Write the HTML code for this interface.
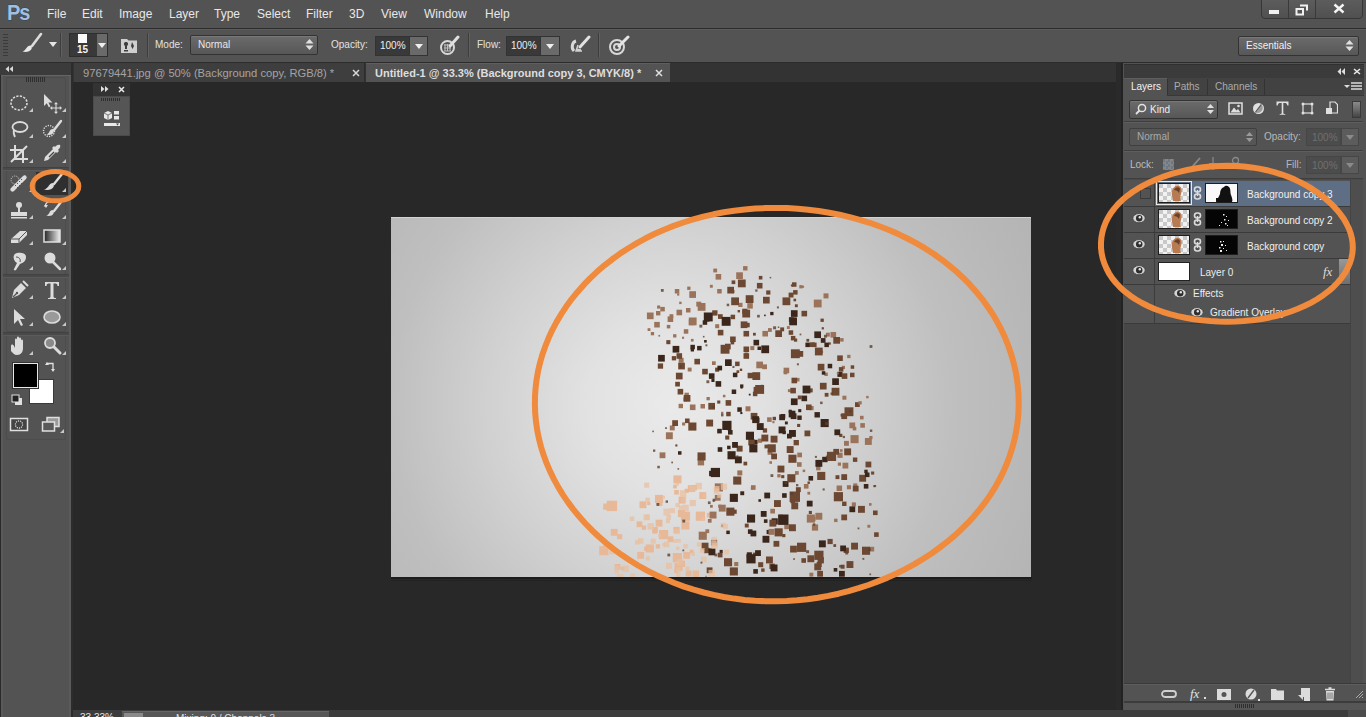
<!DOCTYPE html><html><head><meta charset="utf-8"><style>*{margin:0;padding:0;box-sizing:border-box}
html,body{width:1366px;height:717px;overflow:hidden;background:#282828;font-family:"Liberation Sans",sans-serif;position:relative}
div,span,svg{position:absolute;display:block}
.t{white-space:nowrap;line-height:1}
.m{top:8px;font-size:12px;color:#e8e8e8}
.sep{width:2px;border-left:1px solid #3d3d3d;border-right:1px solid #616161}
.sel{border:1px solid #333;border-radius:2px;background:linear-gradient(#6b6b6b,#575757);box-shadow:inset 0 1px 0 #787878}
.inp{background:#393939;border:1px solid #333}
.dd{background:#6a6a6a;border:1px solid #333;border-left:none}
.lbl{font-size:10px;color:#e2e2e2}
</style></head><body><div style="left:0;top:0;width:1366px;height:28px;background:#535353"></div>
<div style="left:0;top:28px;width:1366px;height:1px;background:#2c2c2c"></div>
<svg style="left:0;top:0" width="40" height="28" viewBox="0 0 40 28"><text x="7" y="18.6" font-family="Liberation Sans" font-weight="bold" font-size="20" letter-spacing="-1" fill="#a4bedb" stroke="#2f4862" stroke-width="1" paint-order="stroke" transform="scale(1 1.1)">Ps</text></svg>
<span class="t m" style="left:47px">File</span>
<span class="t m" style="left:82px">Edit</span>
<span class="t m" style="left:119px">Image</span>
<span class="t m" style="left:169px">Layer</span>
<span class="t m" style="left:214px">Type</span>
<span class="t m" style="left:257px">Select</span>
<span class="t m" style="left:306px">Filter</span>
<span class="t m" style="left:349px">3D</span>
<span class="t m" style="left:381px">View</span>
<span class="t m" style="left:424px">Window</span>
<span class="t m" style="left:485px">Help</span>
<!-- window buttons -->
<div style="left:1261px;top:-2px;width:102px;height:21px;border:1px solid #373737;border-radius:0 0 4px 4px;background:linear-gradient(#5d5d5d,#505050)"></div>
<div style="left:1288px;top:0;width:1px;height:18px;background:#3a3a3a"></div>
<div style="left:1315px;top:0;width:1px;height:18px;background:#3a3a3a"></div>
<div style="left:1269px;top:10px;width:10px;height:4px;background:#f0f0f0"></div>
<svg style="left:1295px;top:4px" width="14" height="12" viewBox="0 0 14 12"><path d="M5 1.5h7v5M1.5 5h6.5v5.5h-6.5z" fill="none" stroke="#f0f0f0" stroke-width="2"/></svg>
<svg style="left:1333px;top:3px" width="12" height="11" viewBox="0 0 12 11"><path d="M1.5 1.5l9 8M10.5 1.5l-9 8" stroke="#f4f4f4" stroke-width="2.4"/></svg>

<!-- options bar -->
<div style="left:0;top:29px;width:1366px;height:33px;background:#535353;border-top:1px solid #5c5c5c"></div>
<div style="left:0;top:62px;width:1366px;height:1px;background:#2c2c2c"></div>
<div style="left:3px;top:34px;width:5px;height:23px;background:repeating-linear-gradient(#3a3a3a 0 1px,transparent 1px 3px)"></div>
<svg style="left:20px;top:32px" width="24" height="22" viewBox="0 0 24 22"><path d="M21 2L12 14" stroke="#dcdcdc" stroke-width="2.6" stroke-linecap="round"/><path d="M10.5 13.5c-2 0-3 1-4 2.5S4 19 2.5 19.5c3 1 7.5 0.5 9-2.5c0.5-1.5 0.5-2.5-1-3.5z" fill="#e8e8e8"/></svg>
<svg style="left:49px;top:42px" width="8" height="5" viewBox="0 0 8 5"><path d="M0 0h8L4 5z" fill="#e6e6e6"/></svg>
<div class="sep" style="left:60px;top:33px;height:24px"></div>
<div style="left:69px;top:33px;width:39px;height:24px;background:#393939;border:1px solid #2e2e2e"></div>
<div style="left:97px;top:34px;width:10px;height:22px;background:#6a6a6a"></div>
<svg style="left:98px;top:43px" width="8" height="5" viewBox="0 0 8 5"><path d="M0 0h8L4 5z" fill="#f0f0f0"/></svg>
<div style="left:78px;top:34px;width:9px;height:9px;background:#fafafa"></div>
<div class="t" style="left:77px;top:45px;font-size:10px;font-weight:bold;color:#f4f4f4">15</div>
<svg style="left:120px;top:36px" width="18" height="18" viewBox="0 0 18 18"><path d="M1 3h6l1.5 1.5H17V17H1z" fill="#cfcfcf"/><path d="M5 6c-1.5 1-1.5 3 0 4v3h2V10c1.5-1 1.5-3 0-4zM12 6l-1 4 1.5 3 1.5-3z" fill="#3e3e3e"/><path d="M4 14h4v1.5H4z" fill="#3e3e3e"/></svg>
<div class="sep" style="left:147px;top:33px;height:24px"></div>
<span class="t lbl" style="left:155px;top:40px">Mode:</span>
<div class="sel" style="left:190px;top:35px;width:128px;height:20px"></div>
<span class="t lbl" style="left:198px;top:40px;color:#e8e8e8">Normal</span>
<svg style="left:305px;top:38px" width="9" height="13" viewBox="0 0 9 13"><path d="M0.5 5.5L4.5 1l4 4.5zM0.5 7.5l4 4.5 4-4.5z" fill="#e0e0e0"/></svg>
<span class="t lbl" style="left:331px;top:40px">Opacity:</span>
<div class="inp" style="left:375px;top:36px;width:35px;height:20px"></div>
<span class="t lbl" style="left:380px;top:41px;color:#f0f0f0">100%</span>
<div class="dd" style="left:410px;top:36px;width:18px;height:20px"></div>
<svg style="left:415px;top:44px" width="8" height="5" viewBox="0 0 8 5"><path d="M0 0h8L4 5z" fill="#f0f0f0"/></svg>
<svg style="left:439px;top:35px" width="21" height="21" viewBox="0 0 21 21"><circle cx="8.5" cy="12.5" r="6.5" fill="none" stroke="#d8d8d8" stroke-width="2"/><path d="M5 10h7M5 13h7M5 16h7M6 9v7M8.5 9v7M11 9v7" stroke="#bdbdbd" stroke-width="1"/><path d="M19 2l-8 9" stroke="#e0e0e0" stroke-width="3" stroke-linecap="round"/></svg>
<div class="sep" style="left:468px;top:33px;height:24px"></div>
<span class="t lbl" style="left:477px;top:40px">Flow:</span>
<div class="inp" style="left:506px;top:36px;width:35px;height:20px"></div>
<span class="t lbl" style="left:511px;top:41px;color:#f0f0f0">100%</span>
<div class="dd" style="left:541px;top:36px;width:19px;height:20px"></div>
<svg style="left:546px;top:44px" width="8" height="5" viewBox="0 0 8 5"><path d="M0 0h8L4 5z" fill="#f0f0f0"/></svg>
<svg style="left:569px;top:35px" width="22" height="21" viewBox="0 0 22 21"><path d="M7 6C3 7 2 13 5 16" fill="none" stroke="#d8d8d8" stroke-width="3"/><path d="M20 2l-9 10" stroke="#e2e2e2" stroke-width="3" stroke-linecap="round"/><path d="M7 14l5 1M9 10l-2 6h6" fill="none" stroke="#d0d0d0" stroke-width="1.5"/></svg>
<div class="sep" style="left:598px;top:33px;height:24px"></div>
<svg style="left:608px;top:35px" width="22" height="21" viewBox="0 0 22 21"><circle cx="9" cy="12" r="7" fill="none" stroke="#d8d8d8" stroke-width="2"/><circle cx="9" cy="12" r="3" fill="none" stroke="#d8d8d8" stroke-width="2"/><path d="M20 2l-9 9" stroke="#e4e4e4" stroke-width="3" stroke-linecap="round"/></svg>
<div class="sel" style="left:1238px;top:36px;width:121px;height:20px"></div>
<span class="t" style="left:1246px;top:41px;font-size:10px;color:#f0f0f0">Essentials</span>
<svg style="left:1345px;top:39px" width="9" height="13" viewBox="0 0 9 13"><path d="M0.5 5.5L4.5 1l4 4.5zM0.5 7.5l4 4.5 4-4.5z" fill="#e0e0e0"/></svg>
<div style="left:73px;top:63px;width:1050px;height:19px;background:#333333"></div>
<div style="left:74px;top:63px;width:291px;height:19px;background:#3e3e3e;border-right:1px solid #2e2e2e"></div>
<span class="t" style="left:83px;top:68px;font-size:11.2px;color:#a4a4a4">97679441.jpg @ 50% (Background copy, RGB/8) *</span>
<svg style="left:352px;top:69px" width="8" height="8" viewBox="0 0 8 8"><path d="M1 1l6 6M7 1L1 7" stroke="#d8d8d8" stroke-width="1.5"/></svg>
<div style="left:366px;top:63px;width:304px;height:19px;background:#535353;border-top:1px solid #5e5e5e"></div>
<span class="t" style="left:375px;top:68px;font-size:11px;font-weight:bold;color:#dedede">Untitled-1 @ 33.3% (Background copy 3, CMYK/8) *</span>
<svg style="left:655px;top:69px" width="8" height="8" viewBox="0 0 8 8"><path d="M1 1l6 6M7 1L1 7" stroke="#e0e0e0" stroke-width="1.5"/></svg>
<!-- mini floating panel -->
<div style="left:93px;top:83px;width:37px;height:13px;background:#333333"></div>
<svg style="left:101px;top:86px" width="8" height="6" viewBox="0 0 8 6"><path d="M0 0l3.5 3L0 6zM4 0l3.5 3L4 6z" fill="#e0e0e0"/></svg>
<svg style="left:118px;top:86px" width="7" height="7" viewBox="0 0 7 7"><path d="M1 1l5 5M6 1L1 6" stroke="#e8e8e8" stroke-width="1.5"/></svg>
<div style="left:93px;top:96px;width:37px;height:40px;background:#555555;border:1px solid #4a4a4a"></div>
<div style="left:101px;top:98px;width:20px;height:3px;background:repeating-linear-gradient(90deg,#2e2e2e 0 1px,transparent 1px 2px)"></div>
<svg style="left:102px;top:109px" width="20" height="20" viewBox="0 0 20 20"><path d="M2 4l4-2 4 2v5l-4 2-4-2z" fill="#e8e8e8"/><path d="M2 4l4 2 4-2M6 6v5" stroke="#555" stroke-width="0.8" fill="none"/><rect x="12" y="2" width="5" height="3.5" fill="#e8e8e8"/><rect x="12" y="7" width="5" height="3.5" fill="#e8e8e8"/><rect x="2" y="14" width="16" height="3" fill="#e8e8e8"/><path d="M14 14.5h3l-1.5 2z" fill="#444"/></svg>
<div style="left:0;top:63px;width:73px;height:12px;background:#3b3b3b"></div>
<svg style="left:5px;top:66px" width="8" height="6" viewBox="0 0 8 6"><path d="M4 0L0.5 3L4 6zM8 0L4.5 3L8 6z" fill="#dadada"/></svg>
<div style="left:0;top:75px;width:1px;height:642px;background:#2a2a2a"></div>
<div style="left:1px;top:75px;width:70px;height:642px;background:#535353;border-left:2px solid #5a5a5a;border-right:2px solid #5a5a5a"></div>
<div style="left:71px;top:63px;width:2px;height:654px;background:#2c2c2c"></div>
<div style="left:1px;top:75px;width:70px;height:1px;background:#646464"></div>
<div style="left:6px;top:77px;width:60px;height:91px;border:1px solid #4c4c4c;border-radius:2px"></div>
<div style="left:6px;top:170px;width:60px;height:105px;border:1px solid #4c4c4c;border-radius:2px"></div>
<div style="left:6px;top:277px;width:60px;height:55px;border:1px solid #4c4c4c;border-radius:2px"></div>
<div style="left:6px;top:334px;width:60px;height:106px;border:1px solid #4c4c4c;border-radius:2px"></div>
<div style="left:26px;top:77px;width:20px;height:5px;background:repeating-linear-gradient(90deg,#2e2e2e 0 1px,transparent 1px 2px)"></div>
<div style="left:3px;top:167px;width:66px;height:4px;background:#494949;border-top:1px solid #424242;border-bottom:1px solid #5a5a5a"></div>
<div style="left:3px;top:274px;width:66px;height:4px;background:#494949;border-top:1px solid #424242;border-bottom:1px solid #5a5a5a"></div>
<div style="left:3px;top:332px;width:66px;height:4px;background:#494949;border-top:1px solid #424242;border-bottom:1px solid #5a5a5a"></div>
<div style="left:36px;top:172px;width:32px;height:23px;background:#2f2f2f"></div>
<svg style="left:7px;top:91px" width="24" height="24" viewBox="-12 -12 24 24"><ellipse cx="0" cy="0" rx="8" ry="7" fill="none" stroke="#dcdcdc" stroke-width="1.6" stroke-dasharray="2.2 1.4"/></svg>
<svg style="left:29px;top:108px" width="4" height="4" viewBox="0 0 4 4"><path d="M4 0v4H0z" fill="#c8c8c8"/></svg>
<svg style="left:40px;top:91px" width="24" height="24" viewBox="-12 -12 24 24"><path d="M-8-9v12l2.8-2.8 2 4 1.6-.8-2-4h4z" fill="#dcdcdc"/><path d="M4 0v10M-1 5h10" stroke="#dcdcdc" stroke-width="1.1"/><path d="M4-1l-2 2.2h4zM4 11l-2-2.2h4zM-2 5l2.2-2v4zM10 5l-2.2-2v4z" fill="#dcdcdc"/></svg>
<svg style="left:62px;top:108px" width="4" height="4" viewBox="0 0 4 4"><path d="M4 0v4H0z" fill="#c8c8c8"/></svg>
<svg style="left:7px;top:117px" width="24" height="24" viewBox="-12 -12 24 24"><ellipse cx="1" cy="-2" rx="7.5" ry="5" fill="none" stroke="#dcdcdc" stroke-width="1.8"/><path d="M-5 1c-1 3 0 5 1 7" stroke="#dcdcdc" stroke-width="1.8" fill="none"/></svg>
<svg style="left:29px;top:134px" width="4" height="4" viewBox="0 0 4 4"><path d="M4 0v4H0z" fill="#c8c8c8"/></svg>
<svg style="left:40px;top:117px" width="24" height="24" viewBox="-12 -12 24 24"><circle cx="-3" cy="2" r="5.5" fill="none" stroke="#dcdcdc" stroke-width="1.4" stroke-dasharray="1.2 1.2"/><path d="M9-8L2 1" stroke="#dcdcdc" stroke-width="2.4" stroke-linecap="round"/><path d="M1 0c-2 0-3 1-3.5 2.5-.5 1.5-2 3-3.5 3 3 1 6.5.5 7.5-2 .5-1.5.5-2.5-.5-3.5z" fill="#dcdcdc"/></svg>
<svg style="left:62px;top:134px" width="4" height="4" viewBox="0 0 4 4"><path d="M4 0v4H0z" fill="#c8c8c8"/></svg>
<svg style="left:7px;top:142px" width="24" height="24" viewBox="-12 -12 24 24"><path d="M-4-9v14h13M-9-4h13v13M-8 8L8-8" stroke="#dcdcdc" stroke-width="2" fill="none"/></svg>
<svg style="left:29px;top:159px" width="4" height="4" viewBox="0 0 4 4"><path d="M4 0v4H0z" fill="#c8c8c8"/></svg>
<svg style="left:40px;top:142px" width="24" height="24" viewBox="-12 -12 24 24"><path d="M8-9c-2-1-4 1-5 2l-1-1-2 2 1 1-8 8-1 4 4-1 8-8 1 1 2-2-1-1c1-1 3-3 2-5z" fill="#dcdcdc"/><path d="M-3 3l5-5" stroke="#444" stroke-width="1.2"/></svg>
<svg style="left:62px;top:159px" width="4" height="4" viewBox="0 0 4 4"><path d="M4 0v4H0z" fill="#c8c8c8"/></svg>
<svg style="left:7px;top:171px" width="24" height="24" viewBox="-12 -12 24 24"><path d="M-8 5L4-7c2-2 5 1 3 3L-5 8c-2 2-5-1-3-3z" fill="#dcdcdc"/><path d="M-4 2l1 1M-2 0l1 1M0-2l1 1M2-4l1 1M-2 4l1 1M0 2l1 1M2 0l1 1" stroke="#555" stroke-width="1"/><circle cx="-4" cy="-3" r="4" fill="none" stroke="#dcdcdc" stroke-width="1" stroke-dasharray="1 1.2"/></svg>
<svg style="left:29px;top:188px" width="4" height="4" viewBox="0 0 4 4"><path d="M4 0v4H0z" fill="#c8c8c8"/></svg>
<svg style="left:40px;top:171px" width="24" height="24" viewBox="-12 -12 24 24"><path d="M10-9L2 1" stroke="#dcdcdc" stroke-width="2.4" stroke-linecap="round"/><path d="M1 0c-2 0-3 1-4 2.5S-6 6-8 6.5c3 1 8 .5 9.5-2.5C2 2.5 2 1.5 1 0z" fill="#dcdcdc"/></svg>
<svg style="left:62px;top:188px" width="4" height="4" viewBox="0 0 4 4"><path d="M4 0v4H0z" fill="#c8c8c8"/></svg>
<svg style="left:7px;top:198px" width="24" height="24" viewBox="-12 -12 24 24"><circle cx="0" cy="-5" r="3" fill="#dcdcdc"/><path d="M-1-3h2v5h-2zM-8 2h16v4h-16zM-8 7h16v1.5h-16z" fill="#dcdcdc"/></svg>
<svg style="left:29px;top:215px" width="4" height="4" viewBox="0 0 4 4"><path d="M4 0v4H0z" fill="#c8c8c8"/></svg>
<svg style="left:40px;top:198px" width="24" height="24" viewBox="-12 -12 24 24"><path d="M9-8L2 1" stroke="#dcdcdc" stroke-width="2.4" stroke-linecap="round"/><path d="M1 0c-2 0-3 1-3.5 2.5-.5 1.5-2 3-3.5 3 3 1 6.5.5 7.5-2 .5-1.5.5-2.5-.5-3.5z" fill="#dcdcdc"/><path d="M-7-3a6 6 0 0 1 6-6" stroke="#dcdcdc" stroke-width="1.3" fill="none"/><path d="M-8-5l2 3 2-3z" fill="#dcdcdc"/></svg>
<svg style="left:62px;top:215px" width="4" height="4" viewBox="0 0 4 4"><path d="M4 0v4H0z" fill="#c8c8c8"/></svg>
<svg style="left:7px;top:224px" width="24" height="24" viewBox="-12 -12 24 24"><path d="M-8 3L1-5h7v4l-8 8h-8z" fill="#dcdcdc"/><path d="M-8 3h8v4M0 3l8-8" stroke="#555" stroke-width="1" fill="none"/></svg>
<svg style="left:29px;top:241px" width="4" height="4" viewBox="0 0 4 4"><path d="M4 0v4H0z" fill="#c8c8c8"/></svg>
<svg style="left:40px;top:224px" width="24" height="24" viewBox="-12 -12 24 24"><defs><linearGradient id="gg"><stop offset="0" stop-color="#222"/><stop offset="1" stop-color="#eee"/></linearGradient></defs><rect x="-8" y="-6" width="16" height="12" fill="url(#gg)" stroke="#e0e0e0" stroke-width="1.5"/></svg>
<svg style="left:62px;top:241px" width="4" height="4" viewBox="0 0 4 4"><path d="M4 0v4H0z" fill="#c8c8c8"/></svg>
<svg style="left:7px;top:249px" width="24" height="24" viewBox="-12 -12 24 24"><path d="M-2-8c4-1 9 0 9 4 0 4-3 6-6 7l-4 6c-1 1-3 0-2-1l3-6c-4-2-5-9 0-10z" fill="#dcdcdc"/><path d="M-3-4c3 0 5 2 4 5" stroke="#555" stroke-width="1" fill="none"/></svg>
<svg style="left:29px;top:266px" width="4" height="4" viewBox="0 0 4 4"><path d="M4 0v4H0z" fill="#c8c8c8"/></svg>
<svg style="left:40px;top:249px" width="24" height="24" viewBox="-12 -12 24 24"><circle cx="-2" cy="-3" r="5.5" fill="#dcdcdc"/><path d="M1 1l7 7" stroke="#dcdcdc" stroke-width="2.5" stroke-linecap="round"/></svg>
<svg style="left:62px;top:266px" width="4" height="4" viewBox="0 0 4 4"><path d="M4 0v4H0z" fill="#c8c8c8"/></svg>
<svg style="left:7px;top:278px" width="24" height="24" viewBox="-12 -12 24 24"><path d="M-7 8l2-8 7-7 5 5-7 7z" fill="#dcdcdc"/><path d="M4-9l5 5" stroke="#dcdcdc" stroke-width="2"/><path d="M-6 7l4-4" stroke="#555" stroke-width="1.2"/><circle cx="-2" cy="3" r="1.2" fill="#555"/></svg>
<svg style="left:29px;top:295px" width="4" height="4" viewBox="0 0 4 4"><path d="M4 0v4H0z" fill="#c8c8c8"/></svg>
<svg style="left:40px;top:278px" width="24" height="24" viewBox="-12 -12 24 24"><path d="M-7-8h14v4h-1.5c0-2-1-2.5-3-2.5h-1v13c0 1 1 1.5 2.5 1.5v1h-8v-1c1.5 0 2.5-.5 2.5-1.5v-13h-1c-2 0-3 .5-3 2.5h-1.5z" fill="#dcdcdc"/></svg>
<svg style="left:62px;top:295px" width="4" height="4" viewBox="0 0 4 4"><path d="M4 0v4H0z" fill="#c8c8c8"/></svg>
<svg style="left:7px;top:305px" width="24" height="24" viewBox="-12 -12 24 24"><path d="M-5-8v15l4-4 3 6 2-1-3-6h5z" fill="#dcdcdc"/></svg>
<svg style="left:29px;top:322px" width="4" height="4" viewBox="0 0 4 4"><path d="M4 0v4H0z" fill="#c8c8c8"/></svg>
<svg style="left:40px;top:305px" width="24" height="24" viewBox="-12 -12 24 24"><ellipse cx="0" cy="0" rx="8" ry="6" fill="#9a9a9a" stroke="#dcdcdc" stroke-width="1.6"/></svg>
<svg style="left:62px;top:322px" width="4" height="4" viewBox="0 0 4 4"><path d="M4 0v4H0z" fill="#c8c8c8"/></svg>
<svg style="left:7px;top:334px" width="24" height="24" viewBox="-12 -12 24 24"><path d="M-8 0c0-2 2-2 3 0l1 2v-8c0-2 2-2 2 0v5v-7c0-2 2-2 2 0v7v-6c0-2 2-2 2 0v6v-4c0-2 2-2 2 0v7c0 4-2 7-6 7-3 0-4-2-6-4z" fill="#dcdcdc"/></svg>
<svg style="left:29px;top:351px" width="4" height="4" viewBox="0 0 4 4"><path d="M4 0v4H0z" fill="#c8c8c8"/></svg>
<svg style="left:40px;top:334px" width="24" height="24" viewBox="-12 -12 24 24"><circle cx="-2" cy="-3" r="5" fill="#8a8a8a" stroke="#dcdcdc" stroke-width="1.8"/><path d="M2 1l6 6" stroke="#dcdcdc" stroke-width="3" stroke-linecap="round"/></svg>
<svg style="left:62px;top:351px" width="4" height="4" viewBox="0 0 4 4"><path d="M4 0v4H0z" fill="#c8c8c8"/></svg>
<div style="left:29px;top:379px;width:25px;height:25px;background:#fff;border:1px solid #3a3a3a"></div>
<div style="left:13px;top:363px;width:25px;height:25px;background:#000;border:1px solid #e8e8e8;outline:1px solid #333"></div>
<svg style="left:45px;top:361px" width="11" height="11" viewBox="0 0 11 11"><path d="M2 4V2.5h6V9" fill="none" stroke="#e0e0e0" stroke-width="1.3"/><path d="M0 4l2-3 2 3zM6 8l2 3 2-3z" fill="#e0e0e0"/></svg>
<svg style="left:11px;top:394px" width="12" height="12" viewBox="0 0 12 12"><rect x="4" y="4" width="7" height="7" fill="#e0e0e0"/><rect x="1" y="1" width="7" height="7" fill="#222" stroke="#e0e0e0" stroke-width="1"/></svg>
<svg style="left:9px;top:417px" width="20" height="16" viewBox="0 0 20 16"><rect x="1.5" y="1.5" width="17" height="12" fill="#444" stroke="#e0e0e0" stroke-width="1.5"/><circle cx="10" cy="7.5" r="3.6" fill="none" stroke="#e0e0e0" stroke-width="1.2" stroke-dasharray="1.2 1"/></svg>
<svg style="left:41px;top:416px" width="22" height="18" viewBox="0 0 22 18"><rect x="6" y="1.5" width="12" height="9" fill="#9a9a9a" stroke="#e0e0e0" stroke-width="1.5"/><rect x="1.5" y="6" width="12" height="9" fill="#5a5a5a" stroke="#e0e0e0" stroke-width="1.5"/></svg>
<svg style="left:60px;top:429px" width="4" height="4" viewBox="0 0 4 4"><path d="M4 0v4H0z" fill="#c8c8c8"/></svg><svg style="left:0;top:0" width="1366" height="717" viewBox="0 0 1366 717"><defs><radialGradient id="docg" gradientUnits="userSpaceOnUse" cx="672" cy="405" r="420"><stop offset="0" stop-color="#eaeaea"/><stop offset="0.2" stop-color="#e2e2e2"/><stop offset="0.45" stop-color="#d0d0d0"/><stop offset="0.67" stop-color="#bfbfbf"/><stop offset="0.85" stop-color="#b8b8b8"/><stop offset="1" stop-color="#b3b3b3"/></radialGradient><clipPath id="dc"><rect x="391" y="217" width="640" height="360"/></clipPath></defs><rect x="391" y="217" width="640" height="360" fill="url(#docg)"/><rect x="391" y="217" width="640" height="1" fill="#d2d2d2"/><rect x="391" y="577" width="641" height="2" fill="#1c1c1c"/><rect x="391" y="580" width="641" height="1" fill="#222"/><g clip-path="url(#dc)"><rect x="713.3" y="268.6" width="3.8" height="3.8" fill="#9a735a"/><rect x="743.1" y="266.1" width="4.4" height="4.4" fill="#9a735a"/><rect x="731.6" y="280.4" width="3.7" height="3.7" fill="#6c4832"/><rect x="758.8" y="275.9" width="3.6" height="3.6" fill="#6c4832"/><rect x="731.4" y="290.0" width="3.2" height="3.2" fill="#9a735a"/><rect x="709.9" y="284.8" width="2.9" height="2.9" fill="#9a735a"/><rect x="687.2" y="286.6" width="3.3" height="3.3" fill="#9a735a"/><rect x="677.1" y="293.4" width="2.2" height="2.2" fill="#9a735a"/><rect x="790.9" y="284.4" width="2.1" height="2.1" fill="#6c4832"/><rect x="802.0" y="285.7" width="2.1" height="2.1" fill="#9a735a"/><rect x="793.5" y="298.7" width="2.6" height="2.6" fill="#6c4832"/><rect x="738.3" y="302.8" width="4.2" height="4.2" fill="#9a735a"/><rect x="747.3" y="303.1" width="5.5" height="5.5" fill="#9a735a"/><rect x="766.2" y="290.4" width="4.2" height="4.2" fill="#6c4832"/><rect x="788.6" y="292.6" width="4.9" height="4.9" fill="#6c4832"/><rect x="823.5" y="293.4" width="5.0" height="5.0" fill="#9a735a"/><rect x="696.3" y="301.7" width="4.9" height="4.9" fill="#9a735a"/><rect x="679.2" y="301.7" width="2.4" height="2.4" fill="#9a735a"/><rect x="669.5" y="314.2" width="3.8" height="3.8" fill="#9a735a"/><rect x="657.1" y="305.5" width="3.1" height="3.1" fill="#9a735a"/><rect x="656.0" y="311.0" width="4.4" height="4.4" fill="#9a735a"/><rect x="647.6" y="328.2" width="2.8" height="2.8" fill="#9a735a"/><rect x="666.8" y="324.9" width="3.5" height="3.5" fill="#9a735a"/><rect x="688.8" y="319.3" width="5.9" height="5.9" fill="#9a735a"/><rect x="712.2" y="310.3" width="5.3" height="5.3" fill="#6c4832"/><rect x="707.1" y="319.2" width="2.4" height="2.4" fill="#3a261b"/><rect x="718.0" y="314.2" width="4.7" height="4.7" fill="#6c4832"/><rect x="737.6" y="310.0" width="2.4" height="2.4" fill="#6c4832"/><rect x="742.3" y="308.7" width="5.1" height="5.1" fill="#6c4832"/><rect x="745.2" y="322.8" width="4.5" height="4.5" fill="#6c4832"/><rect x="790.8" y="317.6" width="5.2" height="5.2" fill="#6c4832"/><rect x="788.9" y="317.1" width="4.8" height="4.8" fill="#6c4832"/><rect x="794.9" y="304.3" width="2.9" height="2.9" fill="#6c4832"/><rect x="764.1" y="314.6" width="1.6" height="1.6" fill="#3a261b"/><rect x="821.7" y="327.2" width="2.2" height="2.2" fill="#6c4832"/><rect x="658.4" y="334.9" width="1.7" height="1.7" fill="#9a735a"/><rect x="682.0" y="336.7" width="2.1" height="2.1" fill="#9a735a"/><rect x="690.9" y="338.9" width="2.7" height="2.7" fill="#9a735a"/><rect x="715.2" y="324.2" width="4.0" height="4.0" fill="#9a735a"/><rect x="730.7" y="340.9" width="3.5" height="3.5" fill="#6c4832"/><rect x="753.0" y="332.8" width="2.8" height="2.8" fill="#6c4832"/><rect x="768.0" y="328.1" width="3.8" height="3.8" fill="#9a735a"/><rect x="780.2" y="327.4" width="3.9" height="3.9" fill="#6c4832"/><rect x="786.9" y="326.1" width="2.9" height="2.9" fill="#9a735a"/><rect x="794.0" y="338.5" width="3.2" height="3.2" fill="#6c4832"/><rect x="820.8" y="338.1" width="4.7" height="4.7" fill="#3a261b"/><rect x="825.9" y="332.7" width="3.9" height="3.9" fill="#9a735a"/><rect x="840.1" y="338.1" width="3.5" height="3.5" fill="#9a735a"/><rect x="657.8" y="363.4" width="5.3" height="5.3" fill="#6c4832"/><rect x="666.3" y="340.1" width="4.1" height="4.1" fill="#6c4832"/><rect x="671.8" y="356.1" width="4.3" height="4.3" fill="#6c4832"/><rect x="690.7" y="348.2" width="3.3" height="3.3" fill="#3a261b"/><rect x="704.1" y="340.0" width="2.6" height="2.6" fill="#3a261b"/><rect x="678.7" y="357.8" width="4.9" height="4.9" fill="#9a735a"/><rect x="687.7" y="367.6" width="3.9" height="3.9" fill="#9a735a"/><rect x="675.2" y="381.8" width="4.7" height="4.7" fill="#6c4832"/><rect x="712.0" y="361.3" width="3.7" height="3.7" fill="#9a735a"/><rect x="715.1" y="367.6" width="4.1" height="4.1" fill="#6c4832"/><rect x="725.0" y="343.7" width="5.7" height="5.7" fill="#6c4832"/><rect x="717.4" y="365.7" width="4.7" height="4.7" fill="#3a261b"/><rect x="736.5" y="370.3" width="2.7" height="2.7" fill="#6c4832"/><rect x="739.8" y="368.6" width="2.4" height="2.4" fill="#6c4832"/><rect x="744.7" y="352.5" width="3.1" height="3.1" fill="#9a735a"/><rect x="750.3" y="346.1" width="4.0" height="4.0" fill="#9a735a"/><rect x="757.5" y="346.5" width="3.5" height="3.5" fill="#3a261b"/><rect x="764.0" y="347.9" width="3.6" height="3.6" fill="#6c4832"/><rect x="762.2" y="364.4" width="4.8" height="4.8" fill="#9a735a"/><rect x="747.6" y="372.8" width="5.5" height="5.5" fill="#6c4832"/><rect x="753.6" y="386.9" width="5.8" height="5.8" fill="#6c4832"/><rect x="760.9" y="384.8" width="2.3" height="2.3" fill="#6c4832"/><rect x="797.4" y="351.0" width="5.8" height="5.8" fill="#6c4832"/><rect x="783.7" y="370.8" width="3.5" height="3.5" fill="#9a735a"/><rect x="795.9" y="377.9" width="3.6" height="3.6" fill="#9a735a"/><rect x="806.4" y="338.9" width="2.8" height="2.8" fill="#6c4832"/><rect x="820.8" y="350.7" width="2.3" height="2.3" fill="#9a735a"/><rect x="809.9" y="342.3" width="4.7" height="4.7" fill="#6c4832"/><rect x="828.5" y="342.4" width="2.3" height="2.3" fill="#6c4832"/><rect x="824.4" y="372.6" width="3.4" height="3.4" fill="#9a735a"/><rect x="821.8" y="371.2" width="3.5" height="3.5" fill="#3a261b"/><rect x="837.4" y="371.8" width="5.1" height="5.1" fill="#3a261b"/><rect x="842.4" y="395.7" width="4.0" height="4.0" fill="#9a735a"/><rect x="847.2" y="354.8" width="3.3" height="3.3" fill="#9a735a"/><rect x="836.8" y="372.4" width="2.0" height="2.0" fill="#9a735a"/><rect x="841.8" y="365.8" width="3.2" height="3.2" fill="#9a735a"/><rect x="850.7" y="365.3" width="3.5" height="3.5" fill="#6c4832"/><rect x="855.0" y="402.2" width="4.8" height="4.8" fill="#6c4832"/><rect x="866.2" y="395.9" width="2.4" height="2.4" fill="#9a735a"/><rect x="684.5" y="392.7" width="4.4" height="4.4" fill="#9a735a"/><rect x="678.6" y="403.8" width="4.4" height="4.4" fill="#9a735a"/><rect x="683.4" y="397.4" width="3.9" height="3.9" fill="#9a735a"/><rect x="717.2" y="400.5" width="3.1" height="3.1" fill="#6c4832"/><rect x="706.5" y="397.0" width="3.3" height="3.3" fill="#9a735a"/><rect x="722.9" y="394.8" width="2.5" height="2.5" fill="#9a735a"/><rect x="740.5" y="386.4" width="2.2" height="2.2" fill="#3a261b"/><rect x="748.8" y="393.7" width="1.8" height="1.8" fill="#3a261b"/><rect x="711.4" y="378.9" width="3.1" height="3.1" fill="#3a261b"/><rect x="787.9" y="389.2" width="2.9" height="2.9" fill="#9a735a"/><rect x="798.2" y="409.1" width="3.1" height="3.1" fill="#3a261b"/><rect x="808.7" y="388.4" width="4.0" height="4.0" fill="#6c4832"/><rect x="797.8" y="395.5" width="3.8" height="3.8" fill="#6c4832"/><rect x="809.4" y="406.0" width="4.2" height="4.2" fill="#9a735a"/><rect x="824.7" y="392.9" width="3.8" height="3.8" fill="#6c4832"/><rect x="788.7" y="409.7" width="3.1" height="3.1" fill="#3a261b"/><rect x="772.6" y="416.8" width="3.4" height="3.4" fill="#6c4832"/><rect x="745.5" y="406.3" width="5.0" height="5.0" fill="#9a735a"/><rect x="740.3" y="412.0" width="2.1" height="2.1" fill="#3a261b"/><rect x="721.0" y="411.8" width="2.4" height="2.4" fill="#9a735a"/><rect x="682.1" y="422.4" width="3.1" height="3.1" fill="#9a735a"/><rect x="685.0" y="418.5" width="4.6" height="4.6" fill="#6c4832"/><rect x="707.4" y="421.3" width="3.6" height="3.6" fill="#6c4832"/><rect x="717.2" y="428.8" width="4.6" height="4.6" fill="#3a261b"/><rect x="726.9" y="427.1" width="3.1" height="3.1" fill="#3a261b"/><rect x="754.7" y="417.7" width="4.9" height="4.9" fill="#6c4832"/><rect x="762.8" y="428.3" width="4.3" height="4.3" fill="#6c4832"/><rect x="772.4" y="421.1" width="2.1" height="2.1" fill="#9a735a"/><rect x="784.9" y="421.5" width="2.9" height="2.9" fill="#3a261b"/><rect x="797.3" y="415.5" width="4.4" height="4.4" fill="#3a261b"/><rect x="814.5" y="412.1" width="5.4" height="5.4" fill="#3a261b"/><rect x="840.6" y="413.9" width="2.7" height="2.7" fill="#6c4832"/><rect x="852.7" y="426.8" width="3.6" height="3.6" fill="#9a735a"/><rect x="860.0" y="415.8" width="3.6" height="3.6" fill="#9a735a"/><rect x="669.8" y="425.5" width="4.9" height="4.9" fill="#9a735a"/><rect x="753.3" y="439.8" width="4.3" height="4.3" fill="#3a261b"/><rect x="757.9" y="438.6" width="4.2" height="4.2" fill="#9a735a"/><rect x="764.5" y="444.6" width="3.8" height="3.8" fill="#6c4832"/><rect x="782.5" y="430.9" width="3.3" height="3.3" fill="#3a261b"/><rect x="787.0" y="433.7" width="4.8" height="4.8" fill="#3a261b"/><rect x="797.1" y="423.9" width="3.1" height="3.1" fill="#6c4832"/><rect x="839.2" y="433.8" width="3.2" height="3.2" fill="#6c4832"/><rect x="660.4" y="453.2" width="2.8" height="2.8" fill="#9a735a"/><rect x="675.3" y="444.4" width="2.1" height="2.1" fill="#6c4832"/><rect x="697.7" y="459.0" width="6.4" height="6.4" fill="#9a735a"/><rect x="727.1" y="445.7" width="3.5" height="3.5" fill="#3a261b"/><rect x="725.2" y="435.5" width="4.1" height="4.1" fill="#6c4832"/><rect x="736.7" y="445.7" width="5.9" height="5.9" fill="#6c4832"/><rect x="743.5" y="461.7" width="3.7" height="3.7" fill="#6c4832"/><rect x="748.3" y="439.1" width="6.3" height="6.3" fill="#6c4832"/><rect x="767.6" y="450.0" width="4.8" height="4.8" fill="#9a735a"/><rect x="769.4" y="461.2" width="2.6" height="2.6" fill="#9a735a"/><rect x="793.6" y="440.0" width="5.3" height="5.3" fill="#6c4832"/><rect x="797.3" y="452.6" width="4.7" height="4.7" fill="#9a735a"/><rect x="777.3" y="474.1" width="3.3" height="3.3" fill="#9a735a"/><rect x="802.7" y="469.6" width="2.5" height="2.5" fill="#9a735a"/><rect x="822.2" y="456.8" width="5.4" height="5.4" fill="#3a261b"/><rect x="837.4" y="452.7" width="5.2" height="5.2" fill="#9a735a"/><rect x="840.0" y="449.2" width="2.6" height="2.6" fill="#9a735a"/><rect x="852.9" y="457.5" width="4.4" height="4.4" fill="#6c4832"/><rect x="844.0" y="440.9" width="4.9" height="4.9" fill="#9a735a"/><rect x="869.3" y="436.0" width="3.2" height="3.2" fill="#9a735a"/><rect x="837.8" y="462.5" width="3.2" height="3.2" fill="#9a735a"/><rect x="871.1" y="471.5" width="3.1" height="3.1" fill="#6c4832"/><rect x="709.1" y="470.8" width="5.4" height="5.4" fill="#3a261b"/><rect x="737.3" y="470.4" width="5.0" height="5.0" fill="#9a735a"/><rect x="717.5" y="484.3" width="4.6" height="4.6" fill="#9a735a"/><rect x="750.8" y="487.1" width="2.5" height="2.5" fill="#9a735a"/><rect x="781.2" y="475.1" width="3.1" height="3.1" fill="#6c4832"/><rect x="795.0" y="471.1" width="3.7" height="3.7" fill="#9a735a"/><rect x="807.5" y="481.5" width="2.4" height="2.4" fill="#6c4832"/><rect x="816.1" y="465.9" width="4.4" height="4.4" fill="#9a735a"/><rect x="835.5" y="475.2" width="3.9" height="3.9" fill="#6c4832"/><rect x="853.3" y="483.4" width="4.0" height="4.0" fill="#9a735a"/><rect x="864.3" y="469.7" width="3.4" height="3.4" fill="#3a261b"/><rect x="846.9" y="485.2" width="4.1" height="4.1" fill="#9a735a"/><rect x="873.4" y="485.0" width="2.2" height="2.2" fill="#6c4832"/><rect x="740.3" y="491.3" width="3.9" height="3.9" fill="#3a261b"/><rect x="710.0" y="504.9" width="2.8" height="2.8" fill="#9a735a"/><rect x="758.4" y="499.2" width="2.6" height="2.6" fill="#3a261b"/><rect x="770.3" y="508.8" width="4.7" height="4.7" fill="#9a735a"/><rect x="791.3" y="496.3" width="2.9" height="2.9" fill="#6c4832"/><rect x="795.9" y="487.2" width="4.9" height="4.9" fill="#6c4832"/><rect x="790.4" y="498.6" width="4.6" height="4.6" fill="#6c4832"/><rect x="808.8" y="510.9" width="3.1" height="3.1" fill="#6c4832"/><rect x="807.4" y="491.8" width="2.8" height="2.8" fill="#9a735a"/><rect x="836.6" y="485.5" width="5.5" height="5.5" fill="#9a735a"/><rect x="842.1" y="501.6" width="4.4" height="4.4" fill="#6c4832"/><rect x="851.8" y="502.4" width="4.1" height="4.1" fill="#9a735a"/><rect x="869.0" y="503.1" width="2.6" height="2.6" fill="#9a735a"/><rect x="718.2" y="504.7" width="3.1" height="3.1" fill="#9a735a"/><rect x="732.5" y="509.6" width="4.2" height="4.2" fill="#6c4832"/><rect x="707.9" y="519.0" width="3.7" height="3.7" fill="#9a735a"/><rect x="744.8" y="523.6" width="3.9" height="3.9" fill="#6c4832"/><rect x="763.9" y="519.3" width="3.6" height="3.6" fill="#3a261b"/><rect x="778.9" y="514.7" width="4.1" height="4.1" fill="#6c4832"/><rect x="771.6" y="518.3" width="6.2" height="6.2" fill="#3a261b"/><rect x="784.3" y="524.4" width="4.8" height="4.8" fill="#9a735a"/><rect x="811.9" y="524.4" width="6.2" height="6.2" fill="#9a735a"/><rect x="811.1" y="516.8" width="4.4" height="4.4" fill="#9a735a"/><rect x="834.1" y="518.7" width="3.4" height="3.4" fill="#9a735a"/><rect x="706.9" y="512.9" width="4.5" height="4.5" fill="#e8b999"/><rect x="677.9" y="509.9" width="7.2" height="7.2" fill="#e8b999"/><rect x="657.8" y="501.3" width="4.7" height="4.7" fill="#e8b999"/><rect x="647.1" y="501.9" width="3.2" height="3.2" fill="#e8b999"/><rect x="603.2" y="503.5" width="6.3" height="6.3" fill="#e8b999"/><rect x="673.1" y="484.7" width="3.7" height="3.7" fill="#e8b999"/><rect x="684.6" y="488.8" width="4.1" height="4.1" fill="#e8b999"/><rect x="691.7" y="485.0" width="5.3" height="5.3" fill="#e8b999"/><rect x="674.2" y="490.0" width="4.6" height="4.6" fill="#e8b999"/><rect x="652.6" y="529.1" width="4.6" height="4.6" fill="#e8b999"/><rect x="641.7" y="525.5" width="4.4" height="4.4" fill="#e8b999"/><rect x="673.4" y="526.9" width="6.2" height="6.2" fill="#e8b999"/><rect x="652.2" y="527.0" width="5.7" height="5.7" fill="#e8b999"/><rect x="655.8" y="544.2" width="4.3" height="4.3" fill="#e8b999"/><rect x="644.1" y="546.6" width="4.3" height="4.3" fill="#e8b999"/><rect x="617.1" y="534.1" width="5.1" height="5.1" fill="#e8b999"/><rect x="603.1" y="545.0" width="5.2" height="5.2" fill="#e8b999"/><rect x="620.9" y="566.7" width="3.6" height="3.6" fill="#e8b999"/><rect x="705.4" y="529.3" width="3.8" height="3.8" fill="#9a735a"/><rect x="702.9" y="545.2" width="3.5" height="3.5" fill="#9a735a"/><rect x="719.6" y="549.9" width="3.1" height="3.1" fill="#3a261b"/><rect x="703.9" y="547.7" width="5.5" height="5.5" fill="#6c4832"/><rect x="721.1" y="524.7" width="2.1" height="2.1" fill="#3a261b"/><rect x="678.7" y="560.7" width="6.3" height="6.3" fill="#e8b999"/><rect x="689.8" y="549.7" width="3.8" height="3.8" fill="#e8b999"/><rect x="674.2" y="569.0" width="4.2" height="4.2" fill="#e8b999"/><rect x="663.3" y="532.9" width="3.2" height="3.2" fill="#e8b999"/><rect x="747.9" y="529.3" width="4.6" height="4.6" fill="#3a261b"/><rect x="766.6" y="529.9" width="4.2" height="4.2" fill="#3a261b"/><rect x="768.5" y="528.9" width="5.9" height="5.9" fill="#9a735a"/><rect x="782.2" y="534.0" width="3.2" height="3.2" fill="#6c4832"/><rect x="790.1" y="545.7" width="6.8" height="6.8" fill="#6c4832"/><rect x="827.5" y="538.9" width="5.2" height="5.2" fill="#6c4832"/><rect x="817.6" y="557.1" width="6.3" height="6.3" fill="#6c4832"/><rect x="801.4" y="558.2" width="4.6" height="4.6" fill="#6c4832"/><rect x="833.4" y="544.2" width="2.7" height="2.7" fill="#6c4832"/><rect x="843.6" y="547.6" width="5.3" height="5.3" fill="#6c4832"/><rect x="869.5" y="546.8" width="4.7" height="4.7" fill="#9a735a"/><rect x="867.4" y="524.8" width="2.9" height="2.9" fill="#9a735a"/><rect x="717.8" y="552.7" width="4.7" height="4.7" fill="#6c4832"/><rect x="734.2" y="562.0" width="4.1" height="4.1" fill="#9a735a"/><rect x="746.8" y="552.3" width="5.1" height="5.1" fill="#3a261b"/><rect x="752.9" y="552.6" width="3.3" height="3.3" fill="#6c4832"/><rect x="758.2" y="562.2" width="5.0" height="5.0" fill="#6c4832"/><rect x="769.4" y="563.6" width="5.4" height="5.4" fill="#6c4832"/><rect x="761.2" y="568.4" width="3.4" height="3.4" fill="#6c4832"/><rect x="816.7" y="561.9" width="5.0" height="5.0" fill="#6c4832"/><rect x="809.4" y="572.7" width="3.9" height="3.9" fill="#9a735a"/><rect x="840.6" y="564.7" width="4.0" height="4.0" fill="#6c4832"/><rect x="833.7" y="568.0" width="3.6" height="3.6" fill="#3a261b"/><rect x="685.8" y="570.6" width="5.9" height="5.9" fill="#e8b999"/><rect x="705.4" y="575.7" width="1.3" height="1.3" fill="#9a735a"/><rect x="715.6" y="274.0" width="5.6" height="5.6" fill="#9a735a"/><rect x="736.2" y="272.3" width="6.7" height="6.7" fill="#9a735a"/><rect x="737.9" y="279.5" width="7.8" height="7.8" fill="#6c4832"/><rect x="756.9" y="282.9" width="5.6" height="5.6" fill="#6c4832"/><rect x="727.3" y="286.8" width="6.7" height="6.7" fill="#6c4832"/><rect x="717.2" y="289.0" width="4.5" height="4.5" fill="#9a735a"/><rect x="689.3" y="291.2" width="6.7" height="6.7" fill="#9a735a"/><rect x="674.8" y="289.0" width="4.5" height="4.5" fill="#9a735a"/><rect x="792.0" y="282.3" width="4.5" height="4.5" fill="#6c4832"/><rect x="799.3" y="285.1" width="3.3" height="3.3" fill="#9a735a"/><rect x="793.1" y="290.1" width="4.5" height="4.5" fill="#6c4832"/><rect x="731.2" y="297.4" width="7.8" height="7.8" fill="#6c4832"/><rect x="745.7" y="295.2" width="7.8" height="7.8" fill="#6c4832"/><rect x="763.0" y="296.8" width="6.7" height="6.7" fill="#6c4832"/><rect x="782.5" y="297.4" width="7.8" height="7.8" fill="#6c4832"/><rect x="813.8" y="299.6" width="7.8" height="7.8" fill="#9a735a"/><rect x="697.7" y="303.0" width="7.8" height="7.8" fill="#9a735a"/><rect x="686.0" y="308.0" width="4.5" height="4.5" fill="#9a735a"/><rect x="676.5" y="309.7" width="5.6" height="5.6" fill="#9a735a"/><rect x="660.3" y="306.9" width="4.5" height="4.5" fill="#9a735a"/><rect x="646.9" y="312.5" width="6.7" height="6.7" fill="#9a735a"/><rect x="654.2" y="321.9" width="5.6" height="5.6" fill="#9a735a"/><rect x="667.6" y="316.4" width="5.6" height="5.6" fill="#9a735a"/><rect x="688.8" y="317.5" width="7.8" height="7.8" fill="#9a735a"/><rect x="703.8" y="312.5" width="8.9" height="8.9" fill="#3a261b"/><rect x="702.7" y="320.3" width="4.5" height="4.5" fill="#3a261b"/><rect x="721.7" y="316.9" width="8.9" height="8.9" fill="#3a261b"/><rect x="730.6" y="314.7" width="4.5" height="4.5" fill="#6c4832"/><rect x="742.3" y="309.7" width="7.8" height="7.8" fill="#6c4832"/><rect x="740.7" y="321.4" width="6.7" height="6.7" fill="#6c4832"/><rect x="790.9" y="310.2" width="6.7" height="6.7" fill="#3a261b"/><rect x="789.2" y="317.5" width="7.8" height="7.8" fill="#3a261b"/><rect x="801.5" y="310.8" width="5.6" height="5.6" fill="#6c4832"/><rect x="770.2" y="311.9" width="3.3" height="3.3" fill="#3a261b"/><rect x="820.5" y="318.6" width="3.3" height="3.3" fill="#6c4832"/><rect x="650.8" y="332.0" width="3.3" height="3.3" fill="#9a735a"/><rect x="673.1" y="334.2" width="3.3" height="3.3" fill="#9a735a"/><rect x="683.8" y="329.2" width="4.5" height="4.5" fill="#9a735a"/><rect x="717.8" y="329.8" width="5.6" height="5.6" fill="#6c4832"/><rect x="730.1" y="336.5" width="5.6" height="5.6" fill="#6c4832"/><rect x="743.5" y="330.9" width="5.6" height="5.6" fill="#6c4832"/><rect x="762.4" y="330.9" width="5.6" height="5.6" fill="#9a735a"/><rect x="775.3" y="330.3" width="6.7" height="6.7" fill="#6c4832"/><rect x="788.7" y="330.3" width="4.5" height="4.5" fill="#6c4832"/><rect x="790.9" y="335.9" width="4.5" height="4.5" fill="#6c4832"/><rect x="814.3" y="331.4" width="6.7" height="6.7" fill="#3a261b"/><rect x="830.5" y="332.0" width="5.6" height="5.6" fill="#9a735a"/><rect x="833.3" y="337.0" width="6.7" height="6.7" fill="#6c4832"/><rect x="658.1" y="354.9" width="6.7" height="6.7" fill="#3a261b"/><rect x="672.6" y="345.9" width="6.7" height="6.7" fill="#3a261b"/><rect x="676.5" y="353.2" width="5.6" height="5.6" fill="#6c4832"/><rect x="690.4" y="344.8" width="4.5" height="4.5" fill="#3a261b"/><rect x="697.1" y="345.9" width="4.5" height="4.5" fill="#3a261b"/><rect x="678.2" y="362.7" width="6.7" height="6.7" fill="#6c4832"/><rect x="694.4" y="358.8" width="5.6" height="5.6" fill="#6c4832"/><rect x="675.9" y="372.7" width="6.7" height="6.7" fill="#6c4832"/><rect x="702.2" y="368.8" width="5.6" height="5.6" fill="#6c4832"/><rect x="708.9" y="373.3" width="5.6" height="5.6" fill="#3a261b"/><rect x="720.6" y="344.8" width="8.9" height="8.9" fill="#6c4832"/><rect x="725.0" y="359.3" width="6.7" height="6.7" fill="#3a261b"/><rect x="735.1" y="361.6" width="4.5" height="4.5" fill="#6c4832"/><rect x="732.9" y="372.7" width="4.5" height="4.5" fill="#3a261b"/><rect x="743.5" y="346.5" width="5.6" height="5.6" fill="#6c4832"/><rect x="743.5" y="353.2" width="5.6" height="5.6" fill="#6c4832"/><rect x="753.5" y="339.8" width="5.6" height="5.6" fill="#3a261b"/><rect x="761.3" y="345.4" width="7.8" height="7.8" fill="#3a261b"/><rect x="756.3" y="361.6" width="6.7" height="6.7" fill="#9a735a"/><rect x="752.4" y="372.2" width="7.8" height="7.8" fill="#6c4832"/><rect x="755.2" y="385.0" width="8.9" height="8.9" fill="#6c4832"/><rect x="752.9" y="391.7" width="4.5" height="4.5" fill="#6c4832"/><rect x="790.9" y="349.3" width="8.9" height="8.9" fill="#6c4832"/><rect x="783.6" y="367.7" width="5.6" height="5.6" fill="#9a735a"/><rect x="791.5" y="377.7" width="5.6" height="5.6" fill="#6c4832"/><rect x="805.4" y="342.6" width="4.5" height="4.5" fill="#3a261b"/><rect x="812.1" y="342.6" width="4.5" height="4.5" fill="#6c4832"/><rect x="814.9" y="347.6" width="7.8" height="7.8" fill="#6c4832"/><rect x="824.4" y="342.6" width="4.5" height="4.5" fill="#3a261b"/><rect x="817.7" y="363.8" width="6.7" height="6.7" fill="#6c4832"/><rect x="827.7" y="363.8" width="4.5" height="4.5" fill="#3a261b"/><rect x="832.2" y="378.3" width="6.7" height="6.7" fill="#3a261b"/><rect x="831.6" y="387.8" width="7.8" height="7.8" fill="#6c4832"/><rect x="837.2" y="355.4" width="5.6" height="5.6" fill="#6c4832"/><rect x="838.9" y="367.1" width="4.5" height="4.5" fill="#6c4832"/><rect x="841.7" y="373.3" width="5.6" height="5.6" fill="#6c4832"/><rect x="850.0" y="372.7" width="4.5" height="4.5" fill="#6c4832"/><rect x="844.5" y="407.3" width="8.9" height="8.9" fill="#6c4832"/><rect x="858.4" y="401.2" width="3.3" height="3.3" fill="#9a735a"/><rect x="677.6" y="388.9" width="5.6" height="5.6" fill="#6c4832"/><rect x="683.7" y="395.0" width="6.7" height="6.7" fill="#6c4832"/><rect x="689.9" y="404.5" width="5.6" height="5.6" fill="#9a735a"/><rect x="708.3" y="402.9" width="6.7" height="6.7" fill="#6c4832"/><rect x="700.5" y="404.0" width="4.5" height="4.5" fill="#9a735a"/><rect x="725.6" y="400.1" width="5.6" height="5.6" fill="#6c4832"/><rect x="731.7" y="389.5" width="4.5" height="4.5" fill="#3a261b"/><rect x="740.1" y="384.4" width="3.3" height="3.3" fill="#3a261b"/><rect x="715.6" y="381.1" width="5.6" height="5.6" fill="#3a261b"/><rect x="790.3" y="387.8" width="5.6" height="5.6" fill="#6c4832"/><rect x="790.9" y="398.4" width="6.7" height="6.7" fill="#3a261b"/><rect x="802.6" y="385.6" width="7.8" height="7.8" fill="#3a261b"/><rect x="801.5" y="395.6" width="5.6" height="5.6" fill="#3a261b"/><rect x="806.0" y="404.5" width="5.6" height="5.6" fill="#6c4832"/><rect x="819.9" y="382.8" width="6.7" height="6.7" fill="#6c4832"/><rect x="788.7" y="410.7" width="6.7" height="6.7" fill="#3a261b"/><rect x="780.8" y="414.0" width="4.5" height="4.5" fill="#3a261b"/><rect x="750.7" y="412.9" width="6.7" height="6.7" fill="#6c4832"/><rect x="737.3" y="407.3" width="4.5" height="4.5" fill="#3a261b"/><rect x="726.2" y="411.8" width="4.5" height="4.5" fill="#6c4832"/><rect x="672.2" y="420.2" width="5.8" height="5.8" fill="#6c4832"/><rect x="688.3" y="422.5" width="8.1" height="8.1" fill="#6c4832"/><rect x="706.2" y="419.6" width="6.9" height="6.9" fill="#6c4832"/><rect x="722.3" y="420.8" width="9.2" height="9.2" fill="#3a261b"/><rect x="728.0" y="430.0" width="4.6" height="4.6" fill="#3a261b"/><rect x="752.2" y="416.2" width="6.9" height="6.9" fill="#3a261b"/><rect x="756.8" y="423.1" width="6.9" height="6.9" fill="#3a261b"/><rect x="767.1" y="417.3" width="4.6" height="4.6" fill="#9a735a"/><rect x="779.2" y="414.4" width="5.8" height="5.8" fill="#3a261b"/><rect x="790.7" y="413.3" width="5.8" height="5.8" fill="#3a261b"/><rect x="820.6" y="419.0" width="8.1" height="8.1" fill="#3a261b"/><rect x="841.3" y="413.3" width="5.8" height="5.8" fill="#6c4832"/><rect x="849.4" y="422.5" width="5.8" height="5.8" fill="#9a735a"/><rect x="860.3" y="423.1" width="4.6" height="4.6" fill="#9a735a"/><rect x="665.9" y="432.3" width="6.9" height="6.9" fill="#9a735a"/><rect x="745.9" y="431.7" width="8.1" height="8.1" fill="#3a261b"/><rect x="761.4" y="434.6" width="6.9" height="6.9" fill="#6c4832"/><rect x="770.6" y="435.7" width="6.9" height="6.9" fill="#6c4832"/><rect x="778.6" y="426.5" width="6.9" height="6.9" fill="#3a261b"/><rect x="789.0" y="430.0" width="6.9" height="6.9" fill="#3a261b"/><rect x="804.5" y="430.5" width="5.8" height="5.8" fill="#6c4832"/><rect x="834.4" y="429.4" width="5.8" height="5.8" fill="#3a261b"/><rect x="659.6" y="452.4" width="5.8" height="5.8" fill="#9a735a"/><rect x="678.0" y="451.2" width="3.5" height="3.5" fill="#3a261b"/><rect x="697.5" y="452.4" width="8.1" height="8.1" fill="#6c4832"/><rect x="717.7" y="447.2" width="4.6" height="4.6" fill="#3a261b"/><rect x="732.1" y="442.0" width="5.8" height="5.8" fill="#3a261b"/><rect x="727.5" y="451.2" width="8.1" height="8.1" fill="#3a261b"/><rect x="734.9" y="456.4" width="6.9" height="6.9" fill="#3a261b"/><rect x="749.3" y="444.3" width="8.1" height="8.1" fill="#3a261b"/><rect x="767.7" y="444.3" width="8.1" height="8.1" fill="#6c4832"/><rect x="771.2" y="453.5" width="5.8" height="5.8" fill="#6c4832"/><rect x="786.7" y="446.1" width="6.9" height="6.9" fill="#6c4832"/><rect x="788.4" y="454.7" width="8.1" height="8.1" fill="#6c4832"/><rect x="777.5" y="465.6" width="6.9" height="6.9" fill="#6c4832"/><rect x="797.0" y="462.2" width="4.6" height="4.6" fill="#9a735a"/><rect x="815.4" y="459.9" width="6.9" height="6.9" fill="#3a261b"/><rect x="826.9" y="451.8" width="9.2" height="9.2" fill="#6c4832"/><rect x="833.3" y="448.9" width="5.8" height="5.8" fill="#6c4832"/><rect x="844.2" y="448.4" width="6.9" height="6.9" fill="#6c4832"/><rect x="850.5" y="435.1" width="8.1" height="8.1" fill="#9a735a"/><rect x="864.9" y="438.0" width="6.9" height="6.9" fill="#9a735a"/><rect x="842.5" y="462.7" width="5.8" height="5.8" fill="#9a735a"/><rect x="865.5" y="461.6" width="5.8" height="5.8" fill="#6c4832"/><rect x="710.8" y="467.9" width="9.2" height="9.2" fill="#3a261b"/><rect x="733.2" y="476.5" width="8.1" height="8.1" fill="#6c4832"/><rect x="714.8" y="483.4" width="8.1" height="8.1" fill="#9a735a"/><rect x="751.0" y="485.2" width="4.6" height="4.6" fill="#9a735a"/><rect x="782.7" y="481.1" width="5.8" height="5.8" fill="#3a261b"/><rect x="787.3" y="474.2" width="8.1" height="8.1" fill="#6c4832"/><rect x="808.5" y="476.0" width="4.6" height="4.6" fill="#3a261b"/><rect x="817.2" y="471.9" width="8.1" height="8.1" fill="#6c4832"/><rect x="841.3" y="474.2" width="5.8" height="5.8" fill="#6c4832"/><rect x="859.2" y="474.8" width="6.9" height="6.9" fill="#6c4832"/><rect x="864.9" y="472.5" width="4.6" height="4.6" fill="#3a261b"/><rect x="852.8" y="485.7" width="5.8" height="5.8" fill="#6c4832"/><rect x="863.8" y="484.0" width="4.6" height="4.6" fill="#3a261b"/><rect x="729.8" y="493.8" width="8.1" height="8.1" fill="#3a261b"/><rect x="714.8" y="494.9" width="5.8" height="5.8" fill="#9a735a"/><rect x="764.3" y="492.6" width="5.8" height="5.8" fill="#3a261b"/><rect x="774.0" y="500.1" width="6.9" height="6.9" fill="#6c4832"/><rect x="782.1" y="493.2" width="4.6" height="4.6" fill="#3a261b"/><rect x="789.6" y="491.5" width="10.4" height="10.4" fill="#6c4832"/><rect x="791.3" y="502.4" width="6.9" height="6.9" fill="#6c4832"/><rect x="806.8" y="500.7" width="5.8" height="5.8" fill="#3a261b"/><rect x="803.9" y="484.0" width="4.6" height="4.6" fill="#9a735a"/><rect x="833.8" y="492.1" width="9.2" height="9.2" fill="#6c4832"/><rect x="849.4" y="506.4" width="5.8" height="5.8" fill="#3a261b"/><rect x="858.0" y="505.9" width="6.9" height="6.9" fill="#6c4832"/><rect x="873.0" y="510.5" width="4.6" height="4.6" fill="#6c4832"/><rect x="718.8" y="504.7" width="6.9" height="6.9" fill="#9a735a"/><rect x="726.3" y="507.6" width="8.1" height="8.1" fill="#6c4832"/><rect x="709.6" y="511.6" width="6.9" height="6.9" fill="#9a735a"/><rect x="747.0" y="514.5" width="8.1" height="8.1" fill="#3a261b"/><rect x="760.8" y="511.0" width="5.8" height="5.8" fill="#3a261b"/><rect x="769.4" y="519.7" width="6.9" height="6.9" fill="#6c4832"/><rect x="778.1" y="514.5" width="10.4" height="10.4" fill="#3a261b"/><rect x="789.0" y="524.3" width="6.9" height="6.9" fill="#6c4832"/><rect x="806.8" y="514.5" width="8.1" height="8.1" fill="#9a735a"/><rect x="815.4" y="512.8" width="6.9" height="6.9" fill="#9a735a"/><rect x="841.3" y="514.5" width="5.8" height="5.8" fill="#6c4832"/><rect x="695.8" y="511.6" width="9.2" height="9.2" fill="#e8b999"/><rect x="680.9" y="511.6" width="9.2" height="9.2" fill="#e8b999"/><rect x="655.0" y="494.9" width="8.1" height="8.1" fill="#e8b999"/><rect x="639.5" y="501.3" width="6.9" height="6.9" fill="#e8b999"/><rect x="606.7" y="500.7" width="10.4" height="10.4" fill="#e8b999"/><rect x="673.4" y="475.4" width="8.1" height="8.1" fill="#e8b999"/><rect x="687.8" y="485.2" width="6.9" height="6.9" fill="#e8b999"/><rect x="699.3" y="492.1" width="6.9" height="6.9" fill="#e8b999"/><rect x="678.6" y="496.7" width="6.9" height="6.9" fill="#e8b999"/><rect x="655.6" y="519.7" width="6.9" height="6.9" fill="#e8b999"/><rect x="636.6" y="521.4" width="5.8" height="5.8" fill="#e8b999"/><rect x="681.4" y="521.4" width="8.1" height="8.1" fill="#e8b999"/><rect x="659.0" y="530.0" width="9.2" height="9.2" fill="#e8b999"/><rect x="645.8" y="544.4" width="8.1" height="8.1" fill="#e8b999"/><rect x="637.2" y="551.9" width="6.9" height="6.9" fill="#e8b999"/><rect x="610.7" y="528.9" width="6.9" height="6.9" fill="#e8b999"/><rect x="599.2" y="546.1" width="9.2" height="9.2" fill="#e8b999"/><rect x="614.7" y="564.0" width="5.8" height="5.8" fill="#e8b999"/><rect x="698.7" y="531.7" width="8.1" height="8.1" fill="#9a735a"/><rect x="701.6" y="542.7" width="6.9" height="6.9" fill="#6c4832"/><rect x="711.3" y="539.8" width="5.8" height="5.8" fill="#3a261b"/><rect x="708.5" y="548.4" width="6.9" height="6.9" fill="#3a261b"/><rect x="726.3" y="530.6" width="3.5" height="3.5" fill="#3a261b"/><rect x="672.8" y="553.0" width="9.2" height="9.2" fill="#e8b999"/><rect x="683.2" y="551.9" width="6.9" height="6.9" fill="#e8b999"/><rect x="674.5" y="562.8" width="8.1" height="8.1" fill="#e8b999"/><rect x="667.6" y="536.3" width="5.8" height="5.8" fill="#e8b999"/><rect x="750.5" y="530.6" width="5.8" height="5.8" fill="#3a261b"/><rect x="762.5" y="535.8" width="6.9" height="6.9" fill="#3a261b"/><rect x="774.6" y="528.3" width="8.1" height="8.1" fill="#6c4832"/><rect x="773.5" y="540.9" width="5.8" height="5.8" fill="#6c4832"/><rect x="797.0" y="542.7" width="9.2" height="9.2" fill="#6c4832"/><rect x="818.9" y="540.4" width="6.9" height="6.9" fill="#3a261b"/><rect x="814.3" y="550.7" width="9.2" height="9.2" fill="#6c4832"/><rect x="807.4" y="555.3" width="6.9" height="6.9" fill="#6c4832"/><rect x="840.2" y="545.5" width="5.8" height="5.8" fill="#3a261b"/><rect x="851.1" y="542.7" width="6.9" height="6.9" fill="#6c4832"/><rect x="862.0" y="546.7" width="8.1" height="8.1" fill="#6c4832"/><rect x="874.1" y="532.3" width="4.6" height="4.6" fill="#6c4832"/><rect x="724.0" y="558.2" width="8.1" height="8.1" fill="#6c4832"/><rect x="729.8" y="567.4" width="8.1" height="8.1" fill="#6c4832"/><rect x="746.4" y="554.2" width="9.2" height="9.2" fill="#3a261b"/><rect x="755.1" y="550.2" width="5.8" height="5.8" fill="#3a261b"/><rect x="766.0" y="556.5" width="6.9" height="6.9" fill="#6c4832"/><rect x="770.6" y="564.5" width="6.9" height="6.9" fill="#3a261b"/><rect x="753.3" y="569.1" width="4.6" height="4.6" fill="#3a261b"/><rect x="814.3" y="563.4" width="6.9" height="6.9" fill="#6c4832"/><rect x="817.2" y="570.9" width="5.8" height="5.8" fill="#6c4832"/><rect x="846.5" y="561.1" width="6.9" height="6.9" fill="#6c4832"/><rect x="839.0" y="570.9" width="5.8" height="5.8" fill="#3a261b"/><rect x="692.6" y="570.5" width="6.5" height="6.5" fill="#e8b999"/><rect x="706.7" y="567.4" width="5.8" height="5.8" fill="#6c4832"/><rect x="637.9" y="538.2" width="5.5" height="5.5" fill="#e8c0a2" opacity="0.75"/><rect x="609.0" y="548.5" width="5.8" height="5.8" fill="#e8c0a2" opacity="0.75"/><rect x="711.2" y="541.4" width="6.4" height="6.4" fill="#e8c0a2" opacity="0.75"/><rect x="676.9" y="538.9" width="3.8" height="3.8" fill="#e8c0a2" opacity="0.75"/><rect x="658.1" y="534.0" width="3.2" height="3.2" fill="#e8c0a2" opacity="0.75"/><rect x="717.2" y="493.5" width="4.4" height="4.4" fill="#e8c0a2" opacity="0.75"/><rect x="617.0" y="574.1" width="6.3" height="6.3" fill="#e8c0a2" opacity="0.75"/><rect x="622.5" y="565.5" width="6.4" height="6.4" fill="#e8c0a2" opacity="0.75"/><rect x="683.4" y="544.1" width="4.3" height="4.3" fill="#e8c0a2" opacity="0.75"/><rect x="647.5" y="523.1" width="6.4" height="6.4" fill="#e8c0a2" opacity="0.75"/><rect x="696.8" y="542.3" width="4.2" height="4.2" fill="#e8c0a2" opacity="0.75"/><rect x="629.7" y="516.5" width="4.5" height="4.5" fill="#e8c0a2" opacity="0.75"/><rect x="662.0" y="495.7" width="3.0" height="3.0" fill="#e8c0a2" opacity="0.75"/><rect x="723.2" y="524.1" width="4.8" height="4.8" fill="#e8c0a2" opacity="0.75"/><rect x="676.6" y="559.1" width="6.3" height="6.3" fill="#e8c0a2" opacity="0.75"/><rect x="700.9" y="517.6" width="3.3" height="3.3" fill="#e8c0a2" opacity="0.75"/><rect x="643.5" y="514.2" width="6.2" height="6.2" fill="#e8c0a2" opacity="0.75"/><rect x="662.1" y="543.1" width="3.2" height="3.2" fill="#e8c0a2" opacity="0.75"/><rect x="614.5" y="569.3" width="4.3" height="4.3" fill="#e8c0a2" opacity="0.75"/><rect x="689.5" y="485.9" width="6.0" height="6.0" fill="#e8c0a2" opacity="0.75"/><rect x="711.6" y="542.6" width="6.1" height="6.1" fill="#e8c0a2" opacity="0.75"/><rect x="676.0" y="546.6" width="3.4" height="3.4" fill="#e8c0a2" opacity="0.75"/><rect x="614.7" y="565.7" width="4.2" height="4.2" fill="#e8c0a2" opacity="0.75"/><rect x="701.0" y="556.7" width="5.7" height="5.7" fill="#e8c0a2" opacity="0.75"/><rect x="689.6" y="499.9" width="6.3" height="6.3" fill="#e8c0a2" opacity="0.75"/><rect x="675.5" y="503.0" width="4.3" height="4.3" fill="#e8c0a2" opacity="0.75"/><rect x="675.9" y="567.6" width="4.8" height="4.8" fill="#e8c0a2" opacity="0.75"/><rect x="630.3" y="573.5" width="4.9" height="4.9" fill="#e8c0a2" opacity="0.75"/><rect x="673.2" y="539.0" width="3.9" height="3.9" fill="#e8c0a2" opacity="0.75"/><rect x="645.3" y="497.7" width="4.6" height="4.6" fill="#e8c0a2" opacity="0.75"/><rect x="678.8" y="505.5" width="4.3" height="4.3" fill="#e8c0a2" opacity="0.75"/><rect x="645.9" y="556.4" width="4.1" height="4.1" fill="#e8c0a2" opacity="0.75"/><rect x="695.6" y="482.8" width="6.4" height="6.4" fill="#e8c0a2" opacity="0.75"/><rect x="720.7" y="522.9" width="5.1" height="5.1" fill="#e8c0a2" opacity="0.75"/><rect x="685.5" y="566.7" width="4.0" height="4.0" fill="#e8c0a2" opacity="0.75"/><rect x="666.0" y="562.8" width="6.0" height="6.0" fill="#e8c0a2" opacity="0.75"/><rect x="645.2" y="515.2" width="4.5" height="4.5" fill="#e8c0a2" opacity="0.75"/><rect x="676.2" y="572.8" width="4.2" height="4.2" fill="#e8c0a2" opacity="0.75"/><rect x="663.5" y="508.7" width="6.9" height="6.9" fill="#e8c0a2" opacity="0.75"/><rect x="708.5" y="569.9" width="6.6" height="6.6" fill="#e8c0a2" opacity="0.75"/><rect x="691.1" y="552.0" width="3.9" height="3.9" fill="#e8c0a2" opacity="0.75"/><rect x="635.0" y="539.9" width="4.7" height="4.7" fill="#e8c0a2" opacity="0.75"/><rect x="644.2" y="482.7" width="5.0" height="5.0" fill="#e8c0a2" opacity="0.75"/><rect x="675.8" y="482.5" width="3.2" height="3.2" fill="#e8c0a2" opacity="0.75"/><rect x="670.0" y="508.1" width="5.1" height="5.1" fill="#e8c0a2" opacity="0.75"/><rect x="665.8" y="518.9" width="4.2" height="4.2" fill="#e8c0a2" opacity="0.75"/><rect x="703.2" y="493.7" width="3.1" height="3.1" fill="#e8c0a2" opacity="0.75"/><rect x="699.8" y="548.0" width="4.8" height="4.8" fill="#e8c0a2" opacity="0.75"/><rect x="682.5" y="504.7" width="6.2" height="6.2" fill="#e8c0a2" opacity="0.75"/><rect x="720.8" y="483.6" width="6.3" height="6.3" fill="#e8c0a2" opacity="0.75"/><rect x="711.4" y="536.9" width="5.3" height="5.3" fill="#e8c0a2" opacity="0.75"/><rect x="674.4" y="529.2" width="5.0" height="5.0" fill="#e8c0a2" opacity="0.75"/><rect x="713.8" y="488.4" width="5.5" height="5.5" fill="#e8c0a2" opacity="0.75"/><rect x="681.4" y="497.5" width="4.7" height="4.7" fill="#e8c0a2" opacity="0.75"/><rect x="663.8" y="541.6" width="5.6" height="5.6" fill="#e8c0a2" opacity="0.75"/><rect x="650.7" y="538.7" width="5.0" height="5.0" fill="#e8c0a2" opacity="0.75"/><rect x="724.2" y="549.7" width="4.9" height="4.9" fill="#e8c0a2" opacity="0.75"/><rect x="666.4" y="515.1" width="4.7" height="4.7" fill="#e8c0a2" opacity="0.75"/><rect x="713.9" y="486.0" width="5.6" height="5.6" fill="#e8c0a2" opacity="0.75"/><rect x="620.3" y="576.7" width="4.0" height="4.0" fill="#e8c0a2" opacity="0.75"/><rect x="679.8" y="490.2" width="6.6" height="6.6" fill="#e8c0a2" opacity="0.75"/><rect x="862.4" y="557.9" width="1.9" height="1.9" fill="#5a3e2c" opacity="0.8"/><rect x="657.3" y="465.8" width="2.5" height="2.5" fill="#5a3e2c" opacity="0.8"/><rect x="806.1" y="550.2" width="3.0" height="3.0" fill="#5a3e2c" opacity="0.8"/><rect x="714.5" y="553.6" width="2.8" height="2.8" fill="#5a3e2c" opacity="0.8"/><rect x="665.1" y="427.2" width="1.8" height="1.8" fill="#5a3e2c" opacity="0.8"/><rect x="857.6" y="527.5" width="1.8" height="1.8" fill="#5a3e2c" opacity="0.8"/><rect x="682.4" y="549.5" width="1.8" height="1.8" fill="#5a3e2c" opacity="0.8"/><rect x="736.3" y="455.4" width="2.1" height="2.1" fill="#5a3e2c" opacity="0.8"/><rect x="845.2" y="551.5" width="3.0" height="3.0" fill="#5a3e2c" opacity="0.8"/><rect x="842.8" y="435.9" width="2.2" height="2.2" fill="#5a3e2c" opacity="0.8"/><rect x="769.7" y="276.9" width="1.5" height="1.5" fill="#5a3e2c" opacity="0.8"/><rect x="869.6" y="345.1" width="2.8" height="2.8" fill="#5a3e2c" opacity="0.8"/><rect x="830.5" y="392.5" width="2.4" height="2.4" fill="#5a3e2c" opacity="0.8"/><rect x="777.8" y="326.5" width="1.5" height="1.5" fill="#5a3e2c" opacity="0.8"/><rect x="671.3" y="461.6" width="1.7" height="1.7" fill="#5a3e2c" opacity="0.8"/><rect x="874.7" y="485.2" width="1.5" height="1.5" fill="#5a3e2c" opacity="0.8"/><rect x="677.5" y="468.1" width="1.6" height="1.6" fill="#5a3e2c" opacity="0.8"/><rect x="660.9" y="289.0" width="2.8" height="2.8" fill="#5a3e2c" opacity="0.8"/><rect x="824.0" y="334.8" width="2.9" height="2.9" fill="#5a3e2c" opacity="0.8"/><rect x="770.5" y="474.2" width="2.8" height="2.8" fill="#5a3e2c" opacity="0.8"/><rect x="822.6" y="488.4" width="2.1" height="2.1" fill="#5a3e2c" opacity="0.8"/><rect x="702.9" y="335.9" width="1.6" height="1.6" fill="#5a3e2c" opacity="0.8"/><rect x="868.1" y="548.3" width="2.6" height="2.6" fill="#5a3e2c" opacity="0.8"/><rect x="665.6" y="500.4" width="2.4" height="2.4" fill="#5a3e2c" opacity="0.8"/><rect x="757.1" y="314.8" width="2.7" height="2.7" fill="#5a3e2c" opacity="0.8"/><rect x="796.9" y="363.3" width="2.0" height="2.0" fill="#5a3e2c" opacity="0.8"/><rect x="706.4" y="380.3" width="2.9" height="2.9" fill="#5a3e2c" opacity="0.8"/><rect x="656.4" y="503.0" width="2.9" height="2.9" fill="#5a3e2c" opacity="0.8"/><rect x="825.8" y="455.6" width="2.2" height="2.2" fill="#5a3e2c" opacity="0.8"/><rect x="712.6" y="498.7" width="2.7" height="2.7" fill="#5a3e2c" opacity="0.8"/><rect x="652.3" y="430.6" width="1.6" height="1.6" fill="#5a3e2c" opacity="0.8"/><rect x="755.2" y="289.4" width="2.3" height="2.3" fill="#5a3e2c" opacity="0.8"/><rect x="812.9" y="523.3" width="2.4" height="2.4" fill="#5a3e2c" opacity="0.8"/><rect x="712.5" y="405.8" width="2.3" height="2.3" fill="#5a3e2c" opacity="0.8"/><rect x="712.8" y="500.2" width="1.6" height="1.6" fill="#5a3e2c" opacity="0.8"/><rect x="726.7" y="303.7" width="2.5" height="2.5" fill="#5a3e2c" opacity="0.8"/><rect x="839.0" y="565.1" width="2.4" height="2.4" fill="#5a3e2c" opacity="0.8"/><rect x="869.9" y="429.5" width="2.4" height="2.4" fill="#5a3e2c" opacity="0.8"/><rect x="682.3" y="519.6" width="2.9" height="2.9" fill="#5a3e2c" opacity="0.8"/><rect x="699.4" y="324.7" width="2.9" height="2.9" fill="#5a3e2c" opacity="0.8"/><rect x="825.2" y="422.1" width="3.0" height="3.0" fill="#5a3e2c" opacity="0.8"/><rect x="776.9" y="306.4" width="2.0" height="2.0" fill="#5a3e2c" opacity="0.8"/><rect x="667.4" y="553.6" width="2.8" height="2.8" fill="#5a3e2c" opacity="0.8"/><rect x="820.1" y="401.6" width="2.5" height="2.5" fill="#5a3e2c" opacity="0.8"/><rect x="732.4" y="365.9" width="2.1" height="2.1" fill="#5a3e2c" opacity="0.8"/><rect x="773.1" y="326.3" width="3.0" height="3.0" fill="#5a3e2c" opacity="0.8"/><rect x="793.2" y="558.2" width="1.7" height="1.7" fill="#5a3e2c" opacity="0.8"/><rect x="784.6" y="481.8" width="2.4" height="2.4" fill="#5a3e2c" opacity="0.8"/><rect x="653.0" y="449.5" width="2.3" height="2.3" fill="#5a3e2c" opacity="0.8"/><rect x="849.0" y="410.1" width="2.3" height="2.3" fill="#5a3e2c" opacity="0.8"/><rect x="721.0" y="413.9" width="2.5" height="2.5" fill="#5a3e2c" opacity="0.8"/><rect x="705.4" y="344.3" width="2.0" height="2.0" fill="#5a3e2c" opacity="0.8"/><rect x="796.0" y="484.0" width="2.3" height="2.3" fill="#5a3e2c" opacity="0.8"/><rect x="707.9" y="501.4" width="2.7" height="2.7" fill="#5a3e2c" opacity="0.8"/><rect x="790.1" y="492.0" width="3.0" height="3.0" fill="#5a3e2c" opacity="0.8"/><rect x="814.9" y="455.9" width="2.0" height="2.0" fill="#5a3e2c" opacity="0.8"/><rect x="700.5" y="561.7" width="1.9" height="1.9" fill="#5a3e2c" opacity="0.8"/><rect x="869.4" y="573.5" width="1.7" height="1.7" fill="#5a3e2c" opacity="0.8"/><rect x="799.6" y="333.6" width="1.7" height="1.7" fill="#5a3e2c" opacity="0.8"/><rect x="679.9" y="365.6" width="1.9" height="1.9" fill="#5a3e2c" opacity="0.8"/></g></svg><div style="left:1116px;top:63px;width:8px;height:654px;background:#2a2a2a"></div>
<div style="left:1121px;top:63px;width:2px;height:654px;background:#232323"></div>
<div style="left:1123px;top:63px;width:243px;height:654px;background:#535353"></div>
<div style="left:1124px;top:64px;width:240px;height:14px;background:#3b3b3b;border-top:1px solid #303030"></div>
<svg style="left:1337px;top:68px" width="8" height="7" viewBox="0 0 8 7"><path d="M4 0L0.5 3.5L4 7zM8 0L4.5 3.5L8 7z" fill="#dedede"/></svg>
<svg style="left:1353px;top:68px" width="8" height="7" viewBox="0 0 8 7"><path d="M1 1l6 5M7 1L1 6" stroke="#e8e8e8" stroke-width="1.6"/></svg>
<div style="left:1124px;top:78px;width:240px;height:18px;background:#424242;border-bottom:1px solid #383838"></div>
<div style="left:1124px;top:78px;width:43px;height:18px;background:#535353;border-top:1px solid #5e5e5e"></div>
<div style="left:1167px;top:79px;width:1px;height:16px;background:#333"></div>
<div style="left:1207px;top:79px;width:1px;height:16px;background:#333"></div>
<div style="left:1264px;top:79px;width:1px;height:16px;background:#333"></div>
<span class="t" style="left:1131px;top:82px;font-size:10px;color:#f2f2f2">Layers</span>
<span class="t" style="left:1174px;top:82px;font-size:10px;color:#ababab">Paths</span>
<span class="t" style="left:1215px;top:82px;font-size:10px;color:#ababab">Channels</span>
<svg style="left:1344px;top:82px" width="18" height="9" viewBox="0 0 18 9"><path d="M0 3h6L3 6z" fill="#dcdcdc"/><path d="M7 1h11M7 4h11M7 7h11" stroke="#dcdcdc" stroke-width="1.3"/></svg>
<div style="left:1124px;top:96px;width:239px;height:588px;background:#535353"></div>
<div class="sel" style="left:1129px;top:100px;width:89px;height:19px"></div>
<svg style="left:1135px;top:103px" width="12" height="12" viewBox="0 0 12 12"><circle cx="7" cy="5" r="3.6" fill="none" stroke="#e4e4e4" stroke-width="1.5"/><path d="M4.5 7.5L1 11" stroke="#e4e4e4" stroke-width="1.8"/></svg>
<span class="t" style="left:1150px;top:105px;font-size:10px;color:#eeeeee">Kind</span>
<svg style="left:1207px;top:103px" width="7" height="12" viewBox="0 0 7 12"><path d="M0 5L3.5 1 7 5zM0 7l3.5 4 3.5-4z" fill="#e0e0e0"/></svg>
<svg style="left:1228px;top:102px" width="15" height="13" viewBox="0 0 15 13"><rect x="1" y="1" width="13" height="11" fill="none" stroke="#e0e0e0" stroke-width="1.5"/><path d="M2.5 10.5l3.5-5 2.5 3 1.5-1.5 2.5 3.5z" fill="#e0e0e0"/><circle cx="10.5" cy="4" r="1.3" fill="#e0e0e0"/></svg>
<svg style="left:1252px;top:102px" width="13" height="13" viewBox="0 0 13 13"><circle cx="6.5" cy="6.5" r="5.5" fill="#e0e0e0"/><path d="M9.5 2.5L3.5 10.5" stroke="#555" stroke-width="1.4"/><path d="M9.8 3a5 5 0 0 1-6 7.5z" fill="#9a9a9a"/></svg>
<svg style="left:1276px;top:101px" width="13" height="14" viewBox="0 0 13 14"><path d="M0.5 0.5h12v4h-1.2c-.3-2-1-2.5-3-2.5h-1v10c0 .8.6 1 2 1v.8H3.7v-.8c1.4 0 2-.2 2-1v-10h-1c-2 0-2.7.5-3 2.5H0.5z" fill="#e0e0e0"/></svg>
<svg style="left:1301px;top:102px" width="13" height="13" viewBox="0 0 13 13"><rect x="2" y="2" width="9" height="9" fill="none" stroke="#e0e0e0" stroke-width="1.2"/><circle cx="2" cy="2" r="1.5" fill="#e0e0e0"/><circle cx="11" cy="2" r="1.5" fill="#e0e0e0"/><circle cx="2" cy="11" r="1.5" fill="#e0e0e0"/><circle cx="11" cy="11" r="1.5" fill="#e0e0e0"/></svg>
<svg style="left:1325px;top:101px" width="13" height="14" viewBox="0 0 13 14"><path d="M5 1h5l2.5 2.5V12H5z" fill="none" stroke="#e0e0e0" stroke-width="1.2"/><rect x="1" y="7" width="6" height="6" fill="#e0e0e0"/></svg>
<div style="left:1352px;top:101px;width:9px;height:17px;background:linear-gradient(#8a8a8a,#6a6a6a 50%,#444);border:1px solid #3a3a3a"></div>
<div style="left:1124px;top:121px;width:239px;height:2px;border-top:1px solid #3e3e3e;border-bottom:1px solid #5e5e5e"></div>
<div style="left:1129px;top:128px;width:128px;height:18px;background:#565656;border:1px solid #3f3f3f;border-radius:2px"></div>
<span class="t" style="left:1137px;top:132px;font-size:10px;color:#a9a9a9">Normal</span>
<svg style="left:1246px;top:131px" width="7" height="12" viewBox="0 0 7 12"><path d="M0 5L3.5 1 7 5zM0 7l3.5 4 3.5-4z" fill="#9a9a9a"/></svg>
<span class="t" style="left:1264px;top:132px;font-size:10px;color:#b8b8b8">Opacity:</span>
<div style="left:1306px;top:128px;width:35px;height:18px;background:#4c4c4c;border:1px solid #464646"></div>
<span class="t" style="left:1312px;top:133px;font-size:10px;color:#707070">100%</span>
<div style="left:1341px;top:128px;width:18px;height:18px;background:#5c5c5c;border:1px solid #464646"></div>
<svg style="left:1346px;top:135px" width="8" height="5" viewBox="0 0 8 5"><path d="M0 0h8L4 5z" fill="#8a8a8a"/></svg>
<div style="left:1124px;top:150px;width:239px;height:2px;border-top:1px solid #3e3e3e;border-bottom:1px solid #5e5e5e"></div>
<span class="t" style="left:1130px;top:160px;font-size:10px;color:#bdbdbd">Lock:</span>
<div style="left:1163px;top:159px;width:11px;height:11px;background:repeating-conic-gradient(#8f8f8f 0 25%,#6f7f8f 0 50%) 0 0/5px 5px;opacity:.85"></div>
<svg style="left:1189px;top:157px" width="12" height="13" viewBox="0 0 12 13"><path d="M11 1L3 10" stroke="#8a8a8a" stroke-width="1.8"/></svg>
<svg style="left:1208px;top:156px" width="10" height="15" viewBox="0 0 10 15"><path d="M5 1v13M1 7.5h8" stroke="#8a8a8a" stroke-width="1.2"/></svg>
<svg style="left:1230px;top:156px" width="11" height="14" viewBox="0 0 11 14"><circle cx="5.5" cy="4.5" r="3" fill="none" stroke="#8a8a8a" stroke-width="1.3"/><rect x="1" y="7" width="9" height="6" fill="#8a8a8a"/></svg>
<span class="t" style="left:1286px;top:160px;font-size:10px;color:#b8b8b8">Fill:</span>
<div style="left:1306px;top:156px;width:35px;height:18px;background:#4c4c4c;border:1px solid #464646"></div>
<span class="t" style="left:1312px;top:161px;font-size:10px;color:#707070">100%</span>
<div style="left:1341px;top:156px;width:18px;height:18px;background:#5c5c5c;border:1px solid #464646"></div>
<svg style="left:1346px;top:163px" width="8" height="5" viewBox="0 0 8 5"><path d="M0 0h8L4 5z" fill="#8a8a8a"/></svg>
<div style="left:1124px;top:178px;width:239px;height:2px;border-top:1px solid #3e3e3e;border-bottom:1px solid #4a4a4a"></div>
<div style="left:1124px;top:180px;width:226px;height:504px;background:#474747"></div>
<div style="left:1350px;top:180px;width:13px;height:504px;background:#4e4e4e;border-left:1px solid #444"></div>
<div style="left:1124px;top:180px;width:226px;height:26px;background:#535353"></div>
<div style="left:1155px;top:181px;width:195px;height:25px;background:#5d6e85"></div>
<div style="left:1140px;top:188px;width:11px;height:11px;border:1px solid #3a3a3a"></div>
<div style="left:1154px;top:180px;width:1px;height:26px;background:#3c3c3c"></div>
<div style="left:1158px;top:183px;width:32px;height:20px;border:1px solid #1e1e1e;background:repeating-conic-gradient(#f2f2f2 0 25%,#c8c8c8 0 50%) 0 0/8px 8px"></div><svg style="left:1170px;top:185px" width="12" height="17" viewBox="0 0 12 17"><path d="M3 16c0-4-2-6-1-10s4-6 7-5 3 5 2 8-1 5 0 7z" fill="#b87a50"/><path d="M4 5c1-3 5-4 6-1l-1 4c-1-2-3-3-5-3z" fill="#6a4028"/></svg>
<div style="left:1156px;top:181px;width:36px;height:24px;border:1px solid #e8e8e8"></div>
<svg style="left:1193px;top:186px" width="9" height="14" viewBox="0 0 9 14"><rect x="1.5" y="1" width="6" height="5" rx="2.5" fill="none" stroke="#dcdcdc" stroke-width="1.6"/><rect x="1.5" y="8" width="6" height="5" rx="2.5" fill="none" stroke="#dcdcdc" stroke-width="1.6"/><path d="M4.5 4v6" stroke="#dcdcdc" stroke-width="1.4"/></svg>
<div style="left:1205px;top:183px;width:33px;height:20px;border:1px solid #1e1e1e;background:#fafafa"></div>
<svg style="left:1206px;top:184px" width="31" height="18" viewBox="0 0 31 18"><path d="M10 18c1-3 3-5 4-8 0-3 1-6 4-7 1-1 3-2 5 0 2 2 1 5 2 8s2 5 1 7z" fill="#111"/><path d="M10 18v-4l4 0z" fill="#111"/></svg>
<span class="t" style="left:1247px;top:190px;font-size:10px;color:#f0f0f0">Background copy 3</span>
<div style="left:1124px;top:206px;width:226px;height:26px;background:#535353"></div>
<svg style="left:1132px;top:213px" width="14" height="11" viewBox="0 0 14 11"><ellipse cx="7" cy="5.2" rx="6.2" ry="4.6" fill="#d4d4d4" stroke="#3a3a3a" stroke-width="0.8"/><circle cx="7.2" cy="5.2" r="3.2" fill="#2e2e2e"/><circle cx="7.8" cy="4.3" r="1.2" fill="#e4e4e4"/></svg>
<div style="left:1154px;top:206px;width:1px;height:26px;background:#3c3c3c"></div>
<div style="left:1158px;top:209px;width:32px;height:20px;border:1px solid #1e1e1e;background:repeating-conic-gradient(#f2f2f2 0 25%,#c8c8c8 0 50%) 0 0/8px 8px"></div><svg style="left:1170px;top:211px" width="12" height="17" viewBox="0 0 12 17"><path d="M3 16c0-4-2-6-1-10s4-6 7-5 3 5 2 8-1 5 0 7z" fill="#b87a50"/><path d="M4 5c1-3 5-4 6-1l-1 4c-1-2-3-3-5-3z" fill="#6a4028"/></svg>
<svg style="left:1193px;top:212px" width="9" height="14" viewBox="0 0 9 14"><rect x="1.5" y="1" width="6" height="5" rx="2.5" fill="none" stroke="#dcdcdc" stroke-width="1.6"/><rect x="1.5" y="8" width="6" height="5" rx="2.5" fill="none" stroke="#dcdcdc" stroke-width="1.6"/><path d="M4.5 4v6" stroke="#dcdcdc" stroke-width="1.4"/></svg>
<div style="left:1205px;top:209px;width:33px;height:20px;border:1px solid #1e1e1e;background:#050505"></div>
<svg style="left:1206px;top:210px" width="31" height="18" viewBox="0 0 31 18"><path d="M17 4h1.5v1.5h-1.5zM20 6h1v1h-1zM18 9h1.5v1.5h-1.5zM22 10h1v1h-1zM15 12h1v1h-1zM19 13h1.5v1.5h-1.5zM13 15h1v1h-1zM21 15h1v1h-1z" fill="#eee"/></svg>
<span class="t" style="left:1247px;top:216px;font-size:10px;color:#f0f0f0">Background copy 2</span>
<div style="left:1124px;top:232px;width:226px;height:26px;background:#535353"></div>
<svg style="left:1132px;top:239px" width="14" height="11" viewBox="0 0 14 11"><ellipse cx="7" cy="5.2" rx="6.2" ry="4.6" fill="#d4d4d4" stroke="#3a3a3a" stroke-width="0.8"/><circle cx="7.2" cy="5.2" r="3.2" fill="#2e2e2e"/><circle cx="7.8" cy="4.3" r="1.2" fill="#e4e4e4"/></svg>
<div style="left:1154px;top:232px;width:1px;height:26px;background:#3c3c3c"></div>
<div style="left:1158px;top:235px;width:32px;height:20px;border:1px solid #1e1e1e;background:repeating-conic-gradient(#f2f2f2 0 25%,#c8c8c8 0 50%) 0 0/8px 8px"></div><svg style="left:1170px;top:237px" width="12" height="17" viewBox="0 0 12 17"><path d="M3 16c0-4-2-6-1-10s4-6 7-5 3 5 2 8-1 5 0 7z" fill="#b87a50"/><path d="M4 5c1-3 5-4 6-1l-1 4c-1-2-3-3-5-3z" fill="#6a4028"/></svg>
<svg style="left:1193px;top:238px" width="9" height="14" viewBox="0 0 9 14"><rect x="1.5" y="1" width="6" height="5" rx="2.5" fill="none" stroke="#dcdcdc" stroke-width="1.6"/><rect x="1.5" y="8" width="6" height="5" rx="2.5" fill="none" stroke="#dcdcdc" stroke-width="1.6"/><path d="M4.5 4v6" stroke="#dcdcdc" stroke-width="1.4"/></svg>
<div style="left:1205px;top:235px;width:33px;height:20px;border:1px solid #1e1e1e;background:#050505"></div>
<svg style="left:1206px;top:236px" width="31" height="18" viewBox="0 0 31 18"><path d="M14 5h1.5v1.5h-1.5zM17 5h1v1h-1zM15 8h2v2h-2zM19 9h1v1h-1zM13 11h1.5v1.5h-1.5zM17 12h1v1h-1zM14 14h2v2h-2zM20 14h1v1h-1z" fill="#eee"/></svg>
<span class="t" style="left:1247px;top:242px;font-size:10px;color:#f0f0f0">Background copy</span>
<div style="left:1124px;top:258px;width:226px;height:26px;background:#535353"></div>
<svg style="left:1132px;top:265px" width="14" height="11" viewBox="0 0 14 11"><ellipse cx="7" cy="5.2" rx="6.2" ry="4.6" fill="#d4d4d4" stroke="#3a3a3a" stroke-width="0.8"/><circle cx="7.2" cy="5.2" r="3.2" fill="#2e2e2e"/><circle cx="7.8" cy="4.3" r="1.2" fill="#e4e4e4"/></svg>
<div style="left:1154px;top:258px;width:1px;height:26px;background:#3c3c3c"></div>
<div style="left:1158px;top:262px;width:32px;height:19px;background:#fff;border:1px solid #222"></div>
<span class="t" style="left:1200px;top:268px;font-size:10px;color:#ececec">Layer 0</span>
<span class="t" style="left:1323px;top:265px;font-size:13px;font-style:italic;font-family:'Liberation Serif',serif;color:#dcdcdc">fx</span>
<div style="left:1339px;top:258px;width:11px;height:26px;background:linear-gradient(#9a9a9a,#6f6f6f)"></div>
<div style="left:1124px;top:206px;width:226px;height:1px;background:#3a3a3a"></div>
<div style="left:1124px;top:232px;width:226px;height:1px;background:#3a3a3a"></div>
<div style="left:1124px;top:258px;width:226px;height:1px;background:#3a3a3a"></div>
<div style="left:1124px;top:284px;width:226px;height:1px;background:#3a3a3a"></div>
<div style="left:1124px;top:285px;width:226px;height:39px;background:#535353;border-bottom:1px solid #3a3a3a"></div>
<div style="left:1154px;top:284px;width:1px;height:39px;background:#3c3c3c"></div>
<svg style="left:1173px;top:288px" width="14" height="11" viewBox="0 0 14 11"><ellipse cx="7" cy="5.2" rx="6.2" ry="4.6" fill="#d4d4d4" stroke="#3a3a3a" stroke-width="0.8"/><circle cx="7.2" cy="5.2" r="3.2" fill="#2e2e2e"/><circle cx="7.8" cy="4.3" r="1.2" fill="#e4e4e4"/></svg>
<span class="t" style="left:1193px;top:289px;font-size:10px;color:#ececec">Effects</span>
<svg style="left:1190px;top:307px" width="14" height="11" viewBox="0 0 14 11"><ellipse cx="7" cy="5.2" rx="6.2" ry="4.6" fill="#d4d4d4" stroke="#3a3a3a" stroke-width="0.8"/><circle cx="7.2" cy="5.2" r="3.2" fill="#2e2e2e"/><circle cx="7.8" cy="4.3" r="1.2" fill="#e4e4e4"/></svg>
<span class="t" style="left:1210px;top:308px;font-size:10px;color:#ececec">Gradient Overlay</span>
<div style="left:1124px;top:683px;width:242px;height:1px;background:#3a3a3a"></div>
<div style="left:1124px;top:684px;width:242px;height:18px;background:#535353;border-top:1px solid #5e5e5e;border-bottom:1px solid #3c3c3c"></div>
<div style="left:1124px;top:702px;width:242px;height:8px;background:#565656;border-top:1px solid #3c3c3c"></div>
<div style="left:1235px;top:704px;width:20px;height:4px;background:repeating-linear-gradient(90deg,#2e2e2e 0 1px,transparent 1px 2px)"></div>
<svg style="left:1161px;top:689px" width="16" height="10" viewBox="0 0 16 10"><rect x="1" y="2" width="14" height="6" rx="3" fill="none" stroke="#cfcfcf" stroke-width="1.8"/></svg>
<span class="t" style="left:1190px;top:687px;font-size:13px;font-style:italic;font-family:'Liberation Serif',serif;color:#e4e4e4">fx</span><div style="left:1204px;top:697px;width:2px;height:2px;background:#ddd"></div>
<svg style="left:1217px;top:689px" width="14" height="11" viewBox="0 0 14 11"><rect x="0" y="0" width="14" height="11" fill="#dcdcdc"/><circle cx="7" cy="5.5" r="2.5" fill="#555"/></svg>
<svg style="left:1245px;top:688px" width="16" height="13" viewBox="0 0 16 13"><circle cx="6" cy="6" r="5.5" fill="#dcdcdc"/><path d="M9 2L3 10" stroke="#555" stroke-width="1.4"/><rect x="13" y="11" width="2" height="2" fill="#ddd"/></svg>
<svg style="left:1271px;top:688px" width="13" height="12" viewBox="0 0 13 12"><path d="M0 1h5l1 1.5h7V12H0z" fill="#dcdcdc"/></svg>
<svg style="left:1298px;top:688px" width="12" height="13" viewBox="0 0 12 13"><path d="M3 0h9v13H6V9H3z" fill="#dcdcdc"/><path d="M0 7h5v5z" fill="#dcdcdc"/></svg>
<svg style="left:1324px;top:687px" width="12" height="14" viewBox="0 0 12 14"><path d="M1 2.5h10M4.5 1h3" stroke="#dcdcdc" stroke-width="1.6"/><path d="M2 4h8l-.5 9.5h-7z" fill="#dcdcdc"/><path d="M4 5.5v6.5M6 5.5v6.5M8 5.5v6.5" stroke="#555" stroke-width="0.8"/></svg>
<svg style="left:1355px;top:690px" width="9" height="9" viewBox="0 0 9 9"><path d="M8 1L1 8M8 4L4 8M8 7L7 8" stroke="#aaa" stroke-width="1"/></svg>
<div style="left:73px;top:710px;width:1275px;height:7px;background:#3c3c3c"></div>
<div style="left:1348px;top:710px;width:18px;height:7px;background:#4c4c4c"></div>
<span class="t" style="left:80px;top:713px;font-size:10px;color:#e8e8e8">33.33%</span>
<div style="left:122px;top:711px;width:207px;height:6px;background:#575757;border-top:1px solid #666"></div>
<div style="left:124px;top:713px;width:19px;height:4px;background:#8a8a8a"></div>
<span class="t" style="left:176px;top:714px;font-size:10px;color:#e0e0e0">Mixing: 0 / Channels 3 ...</span><svg style="left:0;top:0" width="1366" height="717" viewBox="0 0 1366 717">
<path d="M534.9 404.8 L535.0 396.3 L535.6 387.8 L536.6 379.4 L538.1 370.9 L540.1 362.5 L542.5 354.2 L545.4 346.0 L548.7 337.8 L552.4 329.8 L556.6 321.9 L561.2 314.2 L566.2 306.6 L571.7 299.1 L577.5 291.9 L583.7 284.9 L590.3 278.1 L597.2 271.6 L604.5 265.3 L612.2 259.3 L620.1 253.6 L628.4 248.2 L636.9 243.1 L645.7 238.3 L654.8 233.8 L664.1 229.7 L673.6 225.9 L683.3 222.5 L693.2 219.4 L703.3 216.7 L713.5 214.3 L723.8 212.3 L734.2 210.7 L744.7 209.5 L755.2 208.6 L765.8 208.1 L776.5 207.9 L787.1 208.1 L797.7 208.7 L808.2 209.7 L818.7 211.0 L829.2 212.7 L839.5 214.7 L849.7 217.1 L859.8 219.8 L869.7 222.8 L879.4 226.3 L889.0 230.0 L898.3 234.1 L907.4 238.5 L916.2 243.2 L924.8 248.2 L933.1 253.5 L941.1 259.2 L948.7 265.1 L956.1 271.3 L963.0 277.7 L969.7 284.4 L975.9 291.4 L981.8 298.6 L987.2 306.0 L992.3 313.5 L996.9 321.3 L1001.1 329.2 L1004.9 337.3 L1008.2 345.5 L1011.1 353.9 L1013.5 362.3 L1015.5 370.8 L1017.0 379.3 L1018.0 387.9 L1018.6 396.5 L1018.7 405.1 L1018.4 413.6 L1017.6 422.2 L1016.3 430.7 L1014.6 439.1 L1012.4 447.4 L1009.8 455.7 L1006.8 463.8 L1003.3 471.8 L999.4 479.6 L995.1 487.3 L990.4 494.9 L985.3 502.2 L979.7 509.4 L973.8 516.4 L967.6 523.2 L961.0 529.7 L954.0 536.1 L946.7 542.2 L939.1 548.0 L931.2 553.7 L922.9 559.0 L914.5 564.1 L905.7 568.9 L896.7 573.4 L887.5 577.6 L878.0 581.4 L868.4 585.0 L858.6 588.2 L848.6 591.1 L838.5 593.7 L828.3 595.9 L818.0 597.7 L807.6 599.2 L797.1 600.3 L786.6 601.0 L776.1 601.3 L765.6 601.2 L755.1 600.7 L744.6 599.9 L734.2 598.6 L723.9 597.0 L713.7 594.9 L703.7 592.5 L693.7 589.7 L684.0 586.6 L674.4 583.0 L665.0 579.1 L655.8 574.9 L646.8 570.4 L638.1 565.5 L629.7 560.3 L621.5 554.8 L613.7 549.1 L606.1 543.0 L598.9 536.7 L591.9 530.2 L585.4 523.5 L579.2 516.5 L573.3 509.4 L567.9 502.1 L562.8 494.6 L558.1 486.9 L553.9 479.1 L550.0 471.2 L546.6 463.2 L543.6 455.0 L541.0 446.8 L538.9 438.5 L537.2 430.1 L536.0 421.7 L535.2 413.3Z" fill="none" stroke="#f08a3c" stroke-width="6" stroke-linejoin="round"/>
<path d="M1101.0 242.6 L1101.4 237.5 L1102.4 232.3 L1103.8 227.3 L1105.7 222.4 L1108.1 217.6 L1111.0 212.9 L1114.4 208.4 L1118.2 204.0 L1122.5 199.8 L1127.3 195.8 L1132.5 192.0 L1138.1 188.4 L1144.1 185.1 L1150.5 181.9 L1157.3 179.0 L1164.3 176.3 L1171.7 173.9 L1179.3 171.8 L1187.1 170.0 L1195.1 168.5 L1203.2 167.3 L1211.3 166.4 L1219.5 165.9 L1227.7 165.8 L1235.8 165.9 L1243.8 166.5 L1251.6 167.4 L1259.3 168.6 L1266.9 170.2 L1274.2 172.1 L1281.3 174.3 L1288.1 176.8 L1294.7 179.6 L1301.0 182.6 L1307.1 185.9 L1312.8 189.4 L1318.3 193.1 L1323.4 197.0 L1328.2 201.1 L1332.7 205.3 L1336.7 209.7 L1340.4 214.2 L1343.7 218.8 L1346.4 223.5 L1348.8 228.3 L1350.6 233.2 L1351.9 238.2 L1352.6 243.2 L1352.8 248.2 L1352.4 253.3 L1351.4 258.3 L1349.8 263.3 L1347.6 268.2 L1344.9 273.1 L1341.6 277.8 L1337.7 282.5 L1333.4 286.9 L1328.5 291.2 L1323.2 295.2 L1317.5 299.0 L1311.3 302.6 L1304.8 305.8 L1298.0 308.8 L1290.9 311.5 L1283.5 313.9 L1275.9 316.0 L1268.1 317.7 L1260.1 319.2 L1252.0 320.3 L1243.7 321.1 L1235.4 321.5 L1227.0 321.7 L1218.7 321.5 L1210.3 321.1 L1202.0 320.3 L1193.7 319.2 L1185.6 317.8 L1177.7 316.1 L1170.0 314.1 L1162.5 311.8 L1155.3 309.2 L1148.5 306.2 L1142.0 303.0 L1135.9 299.5 L1130.2 295.7 L1125.0 291.7 L1120.3 287.5 L1116.1 283.0 L1112.3 278.3 L1109.1 273.5 L1106.5 268.5 L1104.3 263.4 L1102.7 258.3 L1101.6 253.1 L1101.0 247.8Z" fill="none" stroke="#f08a3c" stroke-width="6" stroke-linejoin="round"/>
<ellipse cx="55.5" cy="186.2" rx="23.3" ry="14.6" fill="none" stroke="#f08a3c" stroke-width="5"/>
</svg>
</body></html>
